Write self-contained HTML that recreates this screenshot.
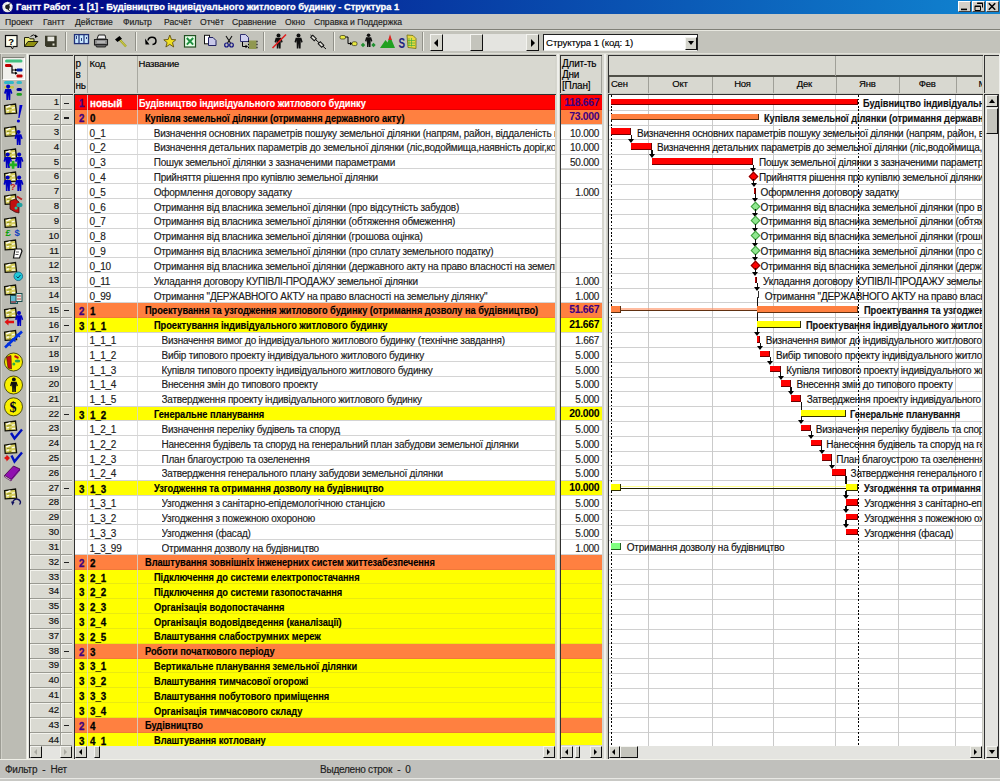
<!DOCTYPE html>
<html><head><meta charset="utf-8"><style>
*{margin:0;padding:0;box-sizing:border-box}
html,body{width:1000px;height:781px;overflow:hidden;background:#c8c8c0;font-family:"Liberation Sans",sans-serif;color:#000}
.a{position:absolute}
.t{position:absolute;white-space:nowrap;font-size:10px;line-height:12px;letter-spacing:-0.23px;-webkit-text-stroke:0.15px currentColor}
.b{font-weight:bold;font-size:10.3px;letter-spacing:-0.05px;-webkit-text-stroke:0.15px currentColor;transform:scaleX(0.9);transform-origin:0 0}
.bn{font-weight:bold;font-size:10.4px;letter-spacing:-0.3px;margin-top:-1.3px;-webkit-text-stroke:0.05px currentColor}
.bl{font-weight:bold;-webkit-text-stroke:0.3px currentColor}
</style></head><body>

<div class="a" style="left:0;top:0;width:1000px;height:14px;background:linear-gradient(90deg,#000080 0%,#1084d0 100%)"></div>
<div class="t bl" style="left:16px;top:1px;color:#fff;font-size:9.3px;letter-spacing:0">Гантт Работ - 1 [1] - Будівництво індивідуального житлового будинку - Структура 1</div>
<div class="a" style="left:958px;top:1px;width:13px;height:11px;background:#d4d0c8;border:1px solid;border-color:#fff #404040 #404040 #fff"></div>
<div class="a" style="left:972px;top:1px;width:13px;height:11px;background:#d4d0c8;border:1px solid;border-color:#fff #404040 #404040 #fff"></div>
<div class="a" style="left:986px;top:1px;width:13px;height:11px;background:#d4d0c8;border:1px solid;border-color:#fff #404040 #404040 #fff"></div>
<svg class="a" style="left:950px;top:0" width="50" height="14" viewBox="950 0 50 14"><rect x="961" y="8.6" width="6" height="1.6" fill="#000"/><path d="M977.5,3.5 h5 v4 M975,6.5 h5.5 v4 h-5.5 Z" fill="#d4d0c8" stroke="#000" stroke-width="1"/><path d="M977.2,3.3 h5.6 M974.7,6.2 h6" stroke="#000" stroke-width="1.6"/><path d="M988.8,3.3 L995.2,9.7 M995.2,3.3 L988.8,9.7" stroke="#000" stroke-width="1.5"/></svg>
<div class="a" style="left:0;top:14px;width:1000px;height:15px;background:#c9c9c4"></div>
<div class="t" style="left:5px;top:16px;font-size:8.6px;letter-spacing:0;color:#202020">Проект</div>
<div class="t" style="left:43px;top:16px;font-size:8.6px;letter-spacing:0;color:#202020">Гантт</div>
<div class="t" style="left:75px;top:16px;font-size:8.6px;letter-spacing:0;color:#202020">Действие</div>
<div class="t" style="left:123px;top:16px;font-size:8.6px;letter-spacing:0;color:#202020">Фильтр</div>
<div class="t" style="left:164px;top:16px;font-size:8.6px;letter-spacing:0;color:#202020">Расчёт</div>
<div class="t" style="left:200px;top:16px;font-size:8.6px;letter-spacing:0;color:#202020">Отчёт</div>
<div class="t" style="left:232px;top:16px;font-size:8.6px;letter-spacing:0;color:#202020">Сравнение</div>
<div class="t" style="left:285px;top:16px;font-size:8.6px;letter-spacing:0;color:#202020">Окно</div>
<div class="t" style="left:314px;top:16px;font-size:8.6px;letter-spacing:0;color:#202020">Справка и Поддержка</div>
<div class="a" style="left:0;top:29px;width:1000px;height:1px;background:#808078"></div>
<div class="a" style="left:0;top:30px;width:1000px;height:1px;background:#e8e8e0"></div>
<div class="a" style="left:0;top:31px;width:1000px;height:22px;background:#c3c3bb"></div>
<div class="a" style="left:65px;top:32px;width:1px;height:19px;background:#909088"></div><div class="a" style="left:66px;top:32px;width:1px;height:19px;background:#f0f0e8"></div>
<div class="a" style="left:135px;top:32px;width:1px;height:19px;background:#909088"></div><div class="a" style="left:136px;top:32px;width:1px;height:19px;background:#f0f0e8"></div>
<div class="a" style="left:263px;top:32px;width:1px;height:19px;background:#909088"></div><div class="a" style="left:264px;top:32px;width:1px;height:19px;background:#f0f0e8"></div>
<div class="a" style="left:332.5px;top:32px;width:1px;height:19px;background:#909088"></div><div class="a" style="left:333.5px;top:32px;width:1px;height:19px;background:#f0f0e8"></div>
<div class="a" style="left:422px;top:32px;width:1px;height:19px;background:#909088"></div><div class="a" style="left:423px;top:32px;width:1px;height:19px;background:#f0f0e8"></div>
<div class="a" style="left:430px;top:34px;width:109px;height:17px;background:#e4e4e0"></div>
<div class="a" style="left:430px;top:34px;width:13px;height:17px;background:#d4d4cc;border-top:1px solid #f4f4f0;border-left:1px solid #f4f4f0;border-right:1.6px solid #101010;border-bottom:1.6px solid #101010"></div>
<div class="a" style="left:526px;top:34px;width:13px;height:17px;background:#d4d4cc;border-top:1px solid #f4f4f0;border-left:1px solid #f4f4f0;border-right:1.6px solid #101010;border-bottom:1.6px solid #101010"></div>
<div class="a" style="left:470px;top:34px;width:13px;height:17px;background:#c4c4bc;border-top:1px solid #f4f4f0;border-left:1px solid #f4f4f0;border-right:1.6px solid #101010;border-bottom:1.6px solid #101010"></div>
<div class="a" style="left:434px;top:39px;width:0;height:0;border-top:4px solid transparent;border-bottom:4px solid transparent;border-right:4px solid #000"></div>
<div class="a" style="left:531px;top:39px;width:0;height:0;border-top:4px solid transparent;border-bottom:4px solid transparent;border-left:4px solid #000"></div>
<div class="a" style="left:543px;top:34px;width:155px;height:17px;background:#fff;border-top:1.3px solid #202020;border-left:1.3px solid #202020;border-right:1.3px solid #202020;border-bottom:1px solid #f0f0ec"></div>
<div class="a" style="left:685px;top:36.6px;width:12px;height:13px;background:#d4d4cc;border-top:1px solid #f4f4f0;border-left:1px solid #f4f4f0;border-right:1.6px solid #101010;border-bottom:1.6px solid #101010"></div>
<div class="a" style="left:688px;top:41px;width:0;height:0;border-left:3.5px solid transparent;border-right:3.5px solid transparent;border-top:4px solid #000"></div>
<div class="t" style="left:546px;top:37px;font-size:9.7px;letter-spacing:-0.1px">Структура 1 (код: 1)</div>
<div class="a" style="left:0;top:53px;width:1000px;height:1px;background:#e0e0d8"></div>
<div class="a" style="left:0;top:54px;width:27px;height:705px;background:#bcbcb4"></div>
<div class="a" style="left:0;top:54px;width:1px;height:705px;background:#9c9c94"></div>
<div class="a" style="left:1px;top:54px;width:1px;height:705px;background:#d0d0c8"></div>
<div class="a" style="left:25.5px;top:54px;width:3px;height:705px;background:#e4e4dc"></div>
<div class="a" style="left:26.5px;top:54px;width:1px;height:705px;background:#f8f8f4"></div>
<div class="a" style="left:2px;top:57px;width:23px;height:23px;background:#f0f0ec;border:1px solid;border-color:#808078 #fff #fff #808078"></div>
<div class="a" style="left:28.5px;top:54.5px;width:46px;height:704px;background:#d8d8d0"></div>
<div class="a" style="left:29px;top:55px;width:1.2px;height:703px;background:#303030"></div>
<div class="a" style="left:29px;top:55px;width:44px;height:1.2px;background:#303030"></div>
<div class="a" style="left:30px;top:56px;width:42.5px;height:37px;background:#d8d8d0"></div>
<div class="a" style="left:29px;top:94px;width:44px;height:1.2px;background:#303030"></div>
<div class="a" style="left:30.2px;top:95.40px;width:30.5px;height:14.82px;background:#dadad2;border-bottom:1px solid #9a9a92;border-right:1px solid #9a9a92;box-shadow:inset 1px 1px 0 #f4f4ee"></div>
<div class="a" style="left:61.2px;top:95.40px;width:11.3px;height:14.82px;background:#dadad2;border-bottom:1px solid #9a9a92;box-shadow:inset 1px 1px 0 #f4f4ee"></div>
<div class="t" style="left:30px;width:29px;text-align:right;top:96.30px;color:#101010;font-size:9.7px;letter-spacing:-0.1px">1</div>
<div class="a" style="left:63.5px;top:102.60px;width:5.5px;height:1.1px;background:#202020"></div>
<div class="a" style="left:30.2px;top:110.22px;width:30.5px;height:14.82px;background:#dadad2;border-bottom:1px solid #9a9a92;border-right:1px solid #9a9a92;box-shadow:inset 1px 1px 0 #f4f4ee"></div>
<div class="a" style="left:61.2px;top:110.22px;width:11.3px;height:14.82px;background:#dadad2;border-bottom:1px solid #9a9a92;box-shadow:inset 1px 1px 0 #f4f4ee"></div>
<div class="t" style="left:30px;width:29px;text-align:right;top:111.12px;color:#101010;font-size:9.7px;letter-spacing:-0.1px">2</div>
<div class="a" style="left:63.5px;top:117.42px;width:5.5px;height:1.1px;background:#202020"></div>
<div class="a" style="left:30.2px;top:125.04px;width:30.5px;height:14.82px;background:#dadad2;border-bottom:1px solid #9a9a92;border-right:1px solid #9a9a92;box-shadow:inset 1px 1px 0 #f4f4ee"></div>
<div class="a" style="left:61.2px;top:125.04px;width:11.3px;height:14.82px;background:#dadad2;border-bottom:1px solid #9a9a92;box-shadow:inset 1px 1px 0 #f4f4ee"></div>
<div class="t" style="left:30px;width:29px;text-align:right;top:125.94px;color:#101010;font-size:9.7px;letter-spacing:-0.1px">3</div>
<div class="a" style="left:30.2px;top:139.86px;width:30.5px;height:14.82px;background:#dadad2;border-bottom:1px solid #9a9a92;border-right:1px solid #9a9a92;box-shadow:inset 1px 1px 0 #f4f4ee"></div>
<div class="a" style="left:61.2px;top:139.86px;width:11.3px;height:14.82px;background:#dadad2;border-bottom:1px solid #9a9a92;box-shadow:inset 1px 1px 0 #f4f4ee"></div>
<div class="t" style="left:30px;width:29px;text-align:right;top:140.76px;color:#101010;font-size:9.7px;letter-spacing:-0.1px">4</div>
<div class="a" style="left:30.2px;top:154.68px;width:30.5px;height:14.82px;background:#dadad2;border-bottom:1px solid #9a9a92;border-right:1px solid #9a9a92;box-shadow:inset 1px 1px 0 #f4f4ee"></div>
<div class="a" style="left:61.2px;top:154.68px;width:11.3px;height:14.82px;background:#dadad2;border-bottom:1px solid #9a9a92;box-shadow:inset 1px 1px 0 #f4f4ee"></div>
<div class="t" style="left:30px;width:29px;text-align:right;top:155.58px;color:#101010;font-size:9.7px;letter-spacing:-0.1px">5</div>
<div class="a" style="left:30.2px;top:169.50px;width:30.5px;height:14.82px;background:#dadad2;border-bottom:1px solid #9a9a92;border-right:1px solid #9a9a92;box-shadow:inset 1px 1px 0 #f4f4ee"></div>
<div class="a" style="left:61.2px;top:169.50px;width:11.3px;height:14.82px;background:#dadad2;border-bottom:1px solid #9a9a92;box-shadow:inset 1px 1px 0 #f4f4ee"></div>
<div class="t" style="left:30px;width:29px;text-align:right;top:170.40px;color:#101010;font-size:9.7px;letter-spacing:-0.1px">6</div>
<div class="a" style="left:30.2px;top:184.32px;width:30.5px;height:14.82px;background:#dadad2;border-bottom:1px solid #9a9a92;border-right:1px solid #9a9a92;box-shadow:inset 1px 1px 0 #f4f4ee"></div>
<div class="a" style="left:61.2px;top:184.32px;width:11.3px;height:14.82px;background:#dadad2;border-bottom:1px solid #9a9a92;box-shadow:inset 1px 1px 0 #f4f4ee"></div>
<div class="t" style="left:30px;width:29px;text-align:right;top:185.22px;color:#101010;font-size:9.7px;letter-spacing:-0.1px">7</div>
<div class="a" style="left:30.2px;top:199.14px;width:30.5px;height:14.82px;background:#dadad2;border-bottom:1px solid #9a9a92;border-right:1px solid #9a9a92;box-shadow:inset 1px 1px 0 #f4f4ee"></div>
<div class="a" style="left:61.2px;top:199.14px;width:11.3px;height:14.82px;background:#dadad2;border-bottom:1px solid #9a9a92;box-shadow:inset 1px 1px 0 #f4f4ee"></div>
<div class="t" style="left:30px;width:29px;text-align:right;top:200.04px;color:#101010;font-size:9.7px;letter-spacing:-0.1px">8</div>
<div class="a" style="left:30.2px;top:213.96px;width:30.5px;height:14.82px;background:#dadad2;border-bottom:1px solid #9a9a92;border-right:1px solid #9a9a92;box-shadow:inset 1px 1px 0 #f4f4ee"></div>
<div class="a" style="left:61.2px;top:213.96px;width:11.3px;height:14.82px;background:#dadad2;border-bottom:1px solid #9a9a92;box-shadow:inset 1px 1px 0 #f4f4ee"></div>
<div class="t" style="left:30px;width:29px;text-align:right;top:214.86px;color:#101010;font-size:9.7px;letter-spacing:-0.1px">9</div>
<div class="a" style="left:30.2px;top:228.78px;width:30.5px;height:14.82px;background:#dadad2;border-bottom:1px solid #9a9a92;border-right:1px solid #9a9a92;box-shadow:inset 1px 1px 0 #f4f4ee"></div>
<div class="a" style="left:61.2px;top:228.78px;width:11.3px;height:14.82px;background:#dadad2;border-bottom:1px solid #9a9a92;box-shadow:inset 1px 1px 0 #f4f4ee"></div>
<div class="t" style="left:30px;width:29px;text-align:right;top:229.68px;color:#101010;font-size:9.7px;letter-spacing:-0.1px">10</div>
<div class="a" style="left:30.2px;top:243.60px;width:30.5px;height:14.82px;background:#dadad2;border-bottom:1px solid #9a9a92;border-right:1px solid #9a9a92;box-shadow:inset 1px 1px 0 #f4f4ee"></div>
<div class="a" style="left:61.2px;top:243.60px;width:11.3px;height:14.82px;background:#dadad2;border-bottom:1px solid #9a9a92;box-shadow:inset 1px 1px 0 #f4f4ee"></div>
<div class="t" style="left:30px;width:29px;text-align:right;top:244.50px;color:#101010;font-size:9.7px;letter-spacing:-0.1px">11</div>
<div class="a" style="left:30.2px;top:258.42px;width:30.5px;height:14.82px;background:#dadad2;border-bottom:1px solid #9a9a92;border-right:1px solid #9a9a92;box-shadow:inset 1px 1px 0 #f4f4ee"></div>
<div class="a" style="left:61.2px;top:258.42px;width:11.3px;height:14.82px;background:#dadad2;border-bottom:1px solid #9a9a92;box-shadow:inset 1px 1px 0 #f4f4ee"></div>
<div class="t" style="left:30px;width:29px;text-align:right;top:259.32px;color:#101010;font-size:9.7px;letter-spacing:-0.1px">12</div>
<div class="a" style="left:30.2px;top:273.24px;width:30.5px;height:14.82px;background:#dadad2;border-bottom:1px solid #9a9a92;border-right:1px solid #9a9a92;box-shadow:inset 1px 1px 0 #f4f4ee"></div>
<div class="a" style="left:61.2px;top:273.24px;width:11.3px;height:14.82px;background:#dadad2;border-bottom:1px solid #9a9a92;box-shadow:inset 1px 1px 0 #f4f4ee"></div>
<div class="t" style="left:30px;width:29px;text-align:right;top:274.14px;color:#101010;font-size:9.7px;letter-spacing:-0.1px">13</div>
<div class="a" style="left:30.2px;top:288.06px;width:30.5px;height:14.82px;background:#dadad2;border-bottom:1px solid #9a9a92;border-right:1px solid #9a9a92;box-shadow:inset 1px 1px 0 #f4f4ee"></div>
<div class="a" style="left:61.2px;top:288.06px;width:11.3px;height:14.82px;background:#dadad2;border-bottom:1px solid #9a9a92;box-shadow:inset 1px 1px 0 #f4f4ee"></div>
<div class="t" style="left:30px;width:29px;text-align:right;top:288.96px;color:#101010;font-size:9.7px;letter-spacing:-0.1px">14</div>
<div class="a" style="left:30.2px;top:302.88px;width:30.5px;height:14.82px;background:#dadad2;border-bottom:1px solid #9a9a92;border-right:1px solid #9a9a92;box-shadow:inset 1px 1px 0 #f4f4ee"></div>
<div class="a" style="left:61.2px;top:302.88px;width:11.3px;height:14.82px;background:#dadad2;border-bottom:1px solid #9a9a92;box-shadow:inset 1px 1px 0 #f4f4ee"></div>
<div class="t" style="left:30px;width:29px;text-align:right;top:303.78px;color:#101010;font-size:9.7px;letter-spacing:-0.1px">15</div>
<div class="a" style="left:63.5px;top:310.08px;width:5.5px;height:1.1px;background:#202020"></div>
<div class="a" style="left:30.2px;top:317.70px;width:30.5px;height:14.82px;background:#dadad2;border-bottom:1px solid #9a9a92;border-right:1px solid #9a9a92;box-shadow:inset 1px 1px 0 #f4f4ee"></div>
<div class="a" style="left:61.2px;top:317.70px;width:11.3px;height:14.82px;background:#dadad2;border-bottom:1px solid #9a9a92;box-shadow:inset 1px 1px 0 #f4f4ee"></div>
<div class="t" style="left:30px;width:29px;text-align:right;top:318.60px;color:#101010;font-size:9.7px;letter-spacing:-0.1px">16</div>
<div class="a" style="left:63.5px;top:324.90px;width:5.5px;height:1.1px;background:#202020"></div>
<div class="a" style="left:30.2px;top:332.52px;width:30.5px;height:14.82px;background:#dadad2;border-bottom:1px solid #9a9a92;border-right:1px solid #9a9a92;box-shadow:inset 1px 1px 0 #f4f4ee"></div>
<div class="a" style="left:61.2px;top:332.52px;width:11.3px;height:14.82px;background:#dadad2;border-bottom:1px solid #9a9a92;box-shadow:inset 1px 1px 0 #f4f4ee"></div>
<div class="t" style="left:30px;width:29px;text-align:right;top:333.42px;color:#101010;font-size:9.7px;letter-spacing:-0.1px">17</div>
<div class="a" style="left:30.2px;top:347.34px;width:30.5px;height:14.82px;background:#dadad2;border-bottom:1px solid #9a9a92;border-right:1px solid #9a9a92;box-shadow:inset 1px 1px 0 #f4f4ee"></div>
<div class="a" style="left:61.2px;top:347.34px;width:11.3px;height:14.82px;background:#dadad2;border-bottom:1px solid #9a9a92;box-shadow:inset 1px 1px 0 #f4f4ee"></div>
<div class="t" style="left:30px;width:29px;text-align:right;top:348.24px;color:#101010;font-size:9.7px;letter-spacing:-0.1px">18</div>
<div class="a" style="left:30.2px;top:362.16px;width:30.5px;height:14.82px;background:#dadad2;border-bottom:1px solid #9a9a92;border-right:1px solid #9a9a92;box-shadow:inset 1px 1px 0 #f4f4ee"></div>
<div class="a" style="left:61.2px;top:362.16px;width:11.3px;height:14.82px;background:#dadad2;border-bottom:1px solid #9a9a92;box-shadow:inset 1px 1px 0 #f4f4ee"></div>
<div class="t" style="left:30px;width:29px;text-align:right;top:363.06px;color:#101010;font-size:9.7px;letter-spacing:-0.1px">19</div>
<div class="a" style="left:30.2px;top:376.98px;width:30.5px;height:14.82px;background:#dadad2;border-bottom:1px solid #9a9a92;border-right:1px solid #9a9a92;box-shadow:inset 1px 1px 0 #f4f4ee"></div>
<div class="a" style="left:61.2px;top:376.98px;width:11.3px;height:14.82px;background:#dadad2;border-bottom:1px solid #9a9a92;box-shadow:inset 1px 1px 0 #f4f4ee"></div>
<div class="t" style="left:30px;width:29px;text-align:right;top:377.88px;color:#101010;font-size:9.7px;letter-spacing:-0.1px">20</div>
<div class="a" style="left:30.2px;top:391.80px;width:30.5px;height:14.82px;background:#dadad2;border-bottom:1px solid #9a9a92;border-right:1px solid #9a9a92;box-shadow:inset 1px 1px 0 #f4f4ee"></div>
<div class="a" style="left:61.2px;top:391.80px;width:11.3px;height:14.82px;background:#dadad2;border-bottom:1px solid #9a9a92;box-shadow:inset 1px 1px 0 #f4f4ee"></div>
<div class="t" style="left:30px;width:29px;text-align:right;top:392.70px;color:#101010;font-size:9.7px;letter-spacing:-0.1px">21</div>
<div class="a" style="left:30.2px;top:406.62px;width:30.5px;height:14.82px;background:#dadad2;border-bottom:1px solid #9a9a92;border-right:1px solid #9a9a92;box-shadow:inset 1px 1px 0 #f4f4ee"></div>
<div class="a" style="left:61.2px;top:406.62px;width:11.3px;height:14.82px;background:#dadad2;border-bottom:1px solid #9a9a92;box-shadow:inset 1px 1px 0 #f4f4ee"></div>
<div class="t" style="left:30px;width:29px;text-align:right;top:407.52px;color:#101010;font-size:9.7px;letter-spacing:-0.1px">22</div>
<div class="a" style="left:63.5px;top:413.82px;width:5.5px;height:1.1px;background:#202020"></div>
<div class="a" style="left:30.2px;top:421.44px;width:30.5px;height:14.82px;background:#dadad2;border-bottom:1px solid #9a9a92;border-right:1px solid #9a9a92;box-shadow:inset 1px 1px 0 #f4f4ee"></div>
<div class="a" style="left:61.2px;top:421.44px;width:11.3px;height:14.82px;background:#dadad2;border-bottom:1px solid #9a9a92;box-shadow:inset 1px 1px 0 #f4f4ee"></div>
<div class="t" style="left:30px;width:29px;text-align:right;top:422.34px;color:#101010;font-size:9.7px;letter-spacing:-0.1px">23</div>
<div class="a" style="left:30.2px;top:436.26px;width:30.5px;height:14.82px;background:#dadad2;border-bottom:1px solid #9a9a92;border-right:1px solid #9a9a92;box-shadow:inset 1px 1px 0 #f4f4ee"></div>
<div class="a" style="left:61.2px;top:436.26px;width:11.3px;height:14.82px;background:#dadad2;border-bottom:1px solid #9a9a92;box-shadow:inset 1px 1px 0 #f4f4ee"></div>
<div class="t" style="left:30px;width:29px;text-align:right;top:437.16px;color:#101010;font-size:9.7px;letter-spacing:-0.1px">24</div>
<div class="a" style="left:30.2px;top:451.08px;width:30.5px;height:14.82px;background:#dadad2;border-bottom:1px solid #9a9a92;border-right:1px solid #9a9a92;box-shadow:inset 1px 1px 0 #f4f4ee"></div>
<div class="a" style="left:61.2px;top:451.08px;width:11.3px;height:14.82px;background:#dadad2;border-bottom:1px solid #9a9a92;box-shadow:inset 1px 1px 0 #f4f4ee"></div>
<div class="t" style="left:30px;width:29px;text-align:right;top:451.98px;color:#101010;font-size:9.7px;letter-spacing:-0.1px">25</div>
<div class="a" style="left:30.2px;top:465.90px;width:30.5px;height:14.82px;background:#dadad2;border-bottom:1px solid #9a9a92;border-right:1px solid #9a9a92;box-shadow:inset 1px 1px 0 #f4f4ee"></div>
<div class="a" style="left:61.2px;top:465.90px;width:11.3px;height:14.82px;background:#dadad2;border-bottom:1px solid #9a9a92;box-shadow:inset 1px 1px 0 #f4f4ee"></div>
<div class="t" style="left:30px;width:29px;text-align:right;top:466.80px;color:#101010;font-size:9.7px;letter-spacing:-0.1px">26</div>
<div class="a" style="left:30.2px;top:480.72px;width:30.5px;height:14.82px;background:#dadad2;border-bottom:1px solid #9a9a92;border-right:1px solid #9a9a92;box-shadow:inset 1px 1px 0 #f4f4ee"></div>
<div class="a" style="left:61.2px;top:480.72px;width:11.3px;height:14.82px;background:#dadad2;border-bottom:1px solid #9a9a92;box-shadow:inset 1px 1px 0 #f4f4ee"></div>
<div class="t" style="left:30px;width:29px;text-align:right;top:481.62px;color:#101010;font-size:9.7px;letter-spacing:-0.1px">27</div>
<div class="a" style="left:63.5px;top:487.92px;width:5.5px;height:1.1px;background:#202020"></div>
<div class="a" style="left:30.2px;top:495.54px;width:30.5px;height:14.82px;background:#dadad2;border-bottom:1px solid #9a9a92;border-right:1px solid #9a9a92;box-shadow:inset 1px 1px 0 #f4f4ee"></div>
<div class="a" style="left:61.2px;top:495.54px;width:11.3px;height:14.82px;background:#dadad2;border-bottom:1px solid #9a9a92;box-shadow:inset 1px 1px 0 #f4f4ee"></div>
<div class="t" style="left:30px;width:29px;text-align:right;top:496.44px;color:#101010;font-size:9.7px;letter-spacing:-0.1px">28</div>
<div class="a" style="left:30.2px;top:510.36px;width:30.5px;height:14.82px;background:#dadad2;border-bottom:1px solid #9a9a92;border-right:1px solid #9a9a92;box-shadow:inset 1px 1px 0 #f4f4ee"></div>
<div class="a" style="left:61.2px;top:510.36px;width:11.3px;height:14.82px;background:#dadad2;border-bottom:1px solid #9a9a92;box-shadow:inset 1px 1px 0 #f4f4ee"></div>
<div class="t" style="left:30px;width:29px;text-align:right;top:511.26px;color:#101010;font-size:9.7px;letter-spacing:-0.1px">29</div>
<div class="a" style="left:30.2px;top:525.18px;width:30.5px;height:14.82px;background:#dadad2;border-bottom:1px solid #9a9a92;border-right:1px solid #9a9a92;box-shadow:inset 1px 1px 0 #f4f4ee"></div>
<div class="a" style="left:61.2px;top:525.18px;width:11.3px;height:14.82px;background:#dadad2;border-bottom:1px solid #9a9a92;box-shadow:inset 1px 1px 0 #f4f4ee"></div>
<div class="t" style="left:30px;width:29px;text-align:right;top:526.08px;color:#101010;font-size:9.7px;letter-spacing:-0.1px">30</div>
<div class="a" style="left:30.2px;top:540.00px;width:30.5px;height:14.82px;background:#dadad2;border-bottom:1px solid #9a9a92;border-right:1px solid #9a9a92;box-shadow:inset 1px 1px 0 #f4f4ee"></div>
<div class="a" style="left:61.2px;top:540.00px;width:11.3px;height:14.82px;background:#dadad2;border-bottom:1px solid #9a9a92;box-shadow:inset 1px 1px 0 #f4f4ee"></div>
<div class="t" style="left:30px;width:29px;text-align:right;top:540.90px;color:#101010;font-size:9.7px;letter-spacing:-0.1px">31</div>
<div class="a" style="left:30.2px;top:554.82px;width:30.5px;height:14.82px;background:#dadad2;border-bottom:1px solid #9a9a92;border-right:1px solid #9a9a92;box-shadow:inset 1px 1px 0 #f4f4ee"></div>
<div class="a" style="left:61.2px;top:554.82px;width:11.3px;height:14.82px;background:#dadad2;border-bottom:1px solid #9a9a92;box-shadow:inset 1px 1px 0 #f4f4ee"></div>
<div class="t" style="left:30px;width:29px;text-align:right;top:555.72px;color:#101010;font-size:9.7px;letter-spacing:-0.1px">32</div>
<div class="a" style="left:63.5px;top:562.02px;width:5.5px;height:1.1px;background:#202020"></div>
<div class="a" style="left:30.2px;top:569.64px;width:30.5px;height:14.82px;background:#dadad2;border-bottom:1px solid #9a9a92;border-right:1px solid #9a9a92;box-shadow:inset 1px 1px 0 #f4f4ee"></div>
<div class="a" style="left:61.2px;top:569.64px;width:11.3px;height:14.82px;background:#dadad2;border-bottom:1px solid #9a9a92;box-shadow:inset 1px 1px 0 #f4f4ee"></div>
<div class="t" style="left:30px;width:29px;text-align:right;top:570.54px;color:#101010;font-size:9.7px;letter-spacing:-0.1px">33</div>
<div class="a" style="left:30.2px;top:584.46px;width:30.5px;height:14.82px;background:#dadad2;border-bottom:1px solid #9a9a92;border-right:1px solid #9a9a92;box-shadow:inset 1px 1px 0 #f4f4ee"></div>
<div class="a" style="left:61.2px;top:584.46px;width:11.3px;height:14.82px;background:#dadad2;border-bottom:1px solid #9a9a92;box-shadow:inset 1px 1px 0 #f4f4ee"></div>
<div class="t" style="left:30px;width:29px;text-align:right;top:585.36px;color:#101010;font-size:9.7px;letter-spacing:-0.1px">34</div>
<div class="a" style="left:30.2px;top:599.28px;width:30.5px;height:14.82px;background:#dadad2;border-bottom:1px solid #9a9a92;border-right:1px solid #9a9a92;box-shadow:inset 1px 1px 0 #f4f4ee"></div>
<div class="a" style="left:61.2px;top:599.28px;width:11.3px;height:14.82px;background:#dadad2;border-bottom:1px solid #9a9a92;box-shadow:inset 1px 1px 0 #f4f4ee"></div>
<div class="t" style="left:30px;width:29px;text-align:right;top:600.18px;color:#101010;font-size:9.7px;letter-spacing:-0.1px">35</div>
<div class="a" style="left:30.2px;top:614.10px;width:30.5px;height:14.82px;background:#dadad2;border-bottom:1px solid #9a9a92;border-right:1px solid #9a9a92;box-shadow:inset 1px 1px 0 #f4f4ee"></div>
<div class="a" style="left:61.2px;top:614.10px;width:11.3px;height:14.82px;background:#dadad2;border-bottom:1px solid #9a9a92;box-shadow:inset 1px 1px 0 #f4f4ee"></div>
<div class="t" style="left:30px;width:29px;text-align:right;top:615.00px;color:#101010;font-size:9.7px;letter-spacing:-0.1px">36</div>
<div class="a" style="left:30.2px;top:628.92px;width:30.5px;height:14.82px;background:#dadad2;border-bottom:1px solid #9a9a92;border-right:1px solid #9a9a92;box-shadow:inset 1px 1px 0 #f4f4ee"></div>
<div class="a" style="left:61.2px;top:628.92px;width:11.3px;height:14.82px;background:#dadad2;border-bottom:1px solid #9a9a92;box-shadow:inset 1px 1px 0 #f4f4ee"></div>
<div class="t" style="left:30px;width:29px;text-align:right;top:629.82px;color:#101010;font-size:9.7px;letter-spacing:-0.1px">37</div>
<div class="a" style="left:30.2px;top:643.74px;width:30.5px;height:14.82px;background:#dadad2;border-bottom:1px solid #9a9a92;border-right:1px solid #9a9a92;box-shadow:inset 1px 1px 0 #f4f4ee"></div>
<div class="a" style="left:61.2px;top:643.74px;width:11.3px;height:14.82px;background:#dadad2;border-bottom:1px solid #9a9a92;box-shadow:inset 1px 1px 0 #f4f4ee"></div>
<div class="t" style="left:30px;width:29px;text-align:right;top:644.64px;color:#101010;font-size:9.7px;letter-spacing:-0.1px">38</div>
<div class="a" style="left:63.5px;top:650.94px;width:5.5px;height:1.1px;background:#202020"></div>
<div class="a" style="left:30.2px;top:658.56px;width:30.5px;height:14.82px;background:#dadad2;border-bottom:1px solid #9a9a92;border-right:1px solid #9a9a92;box-shadow:inset 1px 1px 0 #f4f4ee"></div>
<div class="a" style="left:61.2px;top:658.56px;width:11.3px;height:14.82px;background:#dadad2;border-bottom:1px solid #9a9a92;box-shadow:inset 1px 1px 0 #f4f4ee"></div>
<div class="t" style="left:30px;width:29px;text-align:right;top:659.46px;color:#101010;font-size:9.7px;letter-spacing:-0.1px">39</div>
<div class="a" style="left:30.2px;top:673.38px;width:30.5px;height:14.82px;background:#dadad2;border-bottom:1px solid #9a9a92;border-right:1px solid #9a9a92;box-shadow:inset 1px 1px 0 #f4f4ee"></div>
<div class="a" style="left:61.2px;top:673.38px;width:11.3px;height:14.82px;background:#dadad2;border-bottom:1px solid #9a9a92;box-shadow:inset 1px 1px 0 #f4f4ee"></div>
<div class="t" style="left:30px;width:29px;text-align:right;top:674.28px;color:#101010;font-size:9.7px;letter-spacing:-0.1px">40</div>
<div class="a" style="left:30.2px;top:688.20px;width:30.5px;height:14.82px;background:#dadad2;border-bottom:1px solid #9a9a92;border-right:1px solid #9a9a92;box-shadow:inset 1px 1px 0 #f4f4ee"></div>
<div class="a" style="left:61.2px;top:688.20px;width:11.3px;height:14.82px;background:#dadad2;border-bottom:1px solid #9a9a92;box-shadow:inset 1px 1px 0 #f4f4ee"></div>
<div class="t" style="left:30px;width:29px;text-align:right;top:689.10px;color:#101010;font-size:9.7px;letter-spacing:-0.1px">41</div>
<div class="a" style="left:30.2px;top:703.02px;width:30.5px;height:14.82px;background:#dadad2;border-bottom:1px solid #9a9a92;border-right:1px solid #9a9a92;box-shadow:inset 1px 1px 0 #f4f4ee"></div>
<div class="a" style="left:61.2px;top:703.02px;width:11.3px;height:14.82px;background:#dadad2;border-bottom:1px solid #9a9a92;box-shadow:inset 1px 1px 0 #f4f4ee"></div>
<div class="t" style="left:30px;width:29px;text-align:right;top:703.92px;color:#101010;font-size:9.7px;letter-spacing:-0.1px">42</div>
<div class="a" style="left:30.2px;top:717.84px;width:30.5px;height:14.82px;background:#dadad2;border-bottom:1px solid #9a9a92;border-right:1px solid #9a9a92;box-shadow:inset 1px 1px 0 #f4f4ee"></div>
<div class="a" style="left:61.2px;top:717.84px;width:11.3px;height:14.82px;background:#dadad2;border-bottom:1px solid #9a9a92;box-shadow:inset 1px 1px 0 #f4f4ee"></div>
<div class="t" style="left:30px;width:29px;text-align:right;top:718.74px;color:#101010;font-size:9.7px;letter-spacing:-0.1px">43</div>
<div class="a" style="left:63.5px;top:725.04px;width:5.5px;height:1.1px;background:#202020"></div>
<div class="a" style="left:30.2px;top:732.66px;width:30.5px;height:13.34px;background:#dadad2;border-bottom:1px solid #9a9a92;border-right:1px solid #9a9a92;box-shadow:inset 1px 1px 0 #f4f4ee"></div>
<div class="a" style="left:61.2px;top:732.66px;width:11.3px;height:13.34px;background:#dadad2;border-bottom:1px solid #9a9a92;box-shadow:inset 1px 1px 0 #f4f4ee"></div>
<div class="t" style="left:30px;width:29px;text-align:right;top:733.56px;color:#101010;font-size:9.7px;letter-spacing:-0.1px">44</div>
<div class="a" style="left:74.0px;top:54.5px;width:486.5px;height:704px;background:#d4d4cc"></div>
<div class="a" style="left:74.0px;top:54.6px;width:481.5px;height:1.4px;background:#303030"></div>
<div class="a" style="left:74.0px;top:54.6px;width:1.2px;height:38px;background:#303030"></div>
<div class="a" style="left:75.1px;top:56px;width:480.4px;height:36.5px;background:#d8d8d0"></div>
<div class="a" style="left:86.8px;top:56px;width:1.2px;height:36.5px;background:#a8a8a0"></div>
<div class="a" style="left:136.5px;top:56px;width:1.2px;height:36.5px;background:#a8a8a0"></div>
<div class="t" style="left:75.5px;top:58px;line-height:11.2px">р<br>в<br>нь</div>
<div class="t" style="left:89.5px;top:58px;font-size:9.5px">Код</div>
<div class="t" style="left:138.5px;top:58px;font-size:9.5px">Название</div>
<div class="a" style="left:74.0px;top:93.8px;width:481.5px;height:1.4px;background:#303030"></div>
<div class="a" style="left:74.0px;top:93.8px;width:1.2px;height:665px;background:#303030"></div>
<div class="a" style="left:75.1px;top:95.2px;width:480.4px;height:651px;background:#fff;overflow:hidden">
<div class="a" style="left:0;top:0.20px;width:480.4px;height:14.82px;background:#ff0000;border-bottom:1px solid #e00000"></div>
<div class="a" style="left:0;top:15.02px;width:480.4px;height:14.82px;background:#ff8040;border-bottom:1px solid #d4d4d4"></div>
<div class="a" style="left:0;top:29.84px;width:480.4px;height:14.82px;background:#ffffff;border-bottom:1px solid #d4d4d4"></div>
<div class="a" style="left:0;top:44.66px;width:480.4px;height:14.82px;background:#ffffff;border-bottom:1px solid #d4d4d4"></div>
<div class="a" style="left:0;top:59.48px;width:480.4px;height:14.82px;background:#ffffff;border-bottom:1px solid #d4d4d4"></div>
<div class="a" style="left:0;top:74.30px;width:480.4px;height:14.82px;background:#ffffff;border-bottom:1px solid #d4d4d4"></div>
<div class="a" style="left:0;top:89.12px;width:480.4px;height:14.82px;background:#ffffff;border-bottom:1px solid #d4d4d4"></div>
<div class="a" style="left:0;top:103.94px;width:480.4px;height:14.82px;background:#ffffff;border-bottom:1px solid #d4d4d4"></div>
<div class="a" style="left:0;top:118.76px;width:480.4px;height:14.82px;background:#ffffff;border-bottom:1px solid #d4d4d4"></div>
<div class="a" style="left:0;top:133.58px;width:480.4px;height:14.82px;background:#ffffff;border-bottom:1px solid #d4d4d4"></div>
<div class="a" style="left:0;top:148.40px;width:480.4px;height:14.82px;background:#ffffff;border-bottom:1px solid #d4d4d4"></div>
<div class="a" style="left:0;top:163.22px;width:480.4px;height:14.82px;background:#ffffff;border-bottom:1px solid #d4d4d4"></div>
<div class="a" style="left:0;top:178.04px;width:480.4px;height:14.82px;background:#ffffff;border-bottom:1px solid #d4d4d4"></div>
<div class="a" style="left:0;top:192.86px;width:480.4px;height:14.82px;background:#ffffff;border-bottom:1px solid #d4d4d4"></div>
<div class="a" style="left:0;top:207.68px;width:480.4px;height:14.82px;background:#ff8040;border-bottom:1px solid #f07838"></div>
<div class="a" style="left:0;top:222.50px;width:480.4px;height:14.82px;background:#ffff00;border-bottom:1px solid #d4d4d4"></div>
<div class="a" style="left:0;top:237.32px;width:480.4px;height:14.82px;background:#ffffff;border-bottom:1px solid #d4d4d4"></div>
<div class="a" style="left:0;top:252.14px;width:480.4px;height:14.82px;background:#ffffff;border-bottom:1px solid #d4d4d4"></div>
<div class="a" style="left:0;top:266.96px;width:480.4px;height:14.82px;background:#ffffff;border-bottom:1px solid #d4d4d4"></div>
<div class="a" style="left:0;top:281.78px;width:480.4px;height:14.82px;background:#ffffff;border-bottom:1px solid #d4d4d4"></div>
<div class="a" style="left:0;top:296.60px;width:480.4px;height:14.82px;background:#ffffff;border-bottom:1px solid #d4d4d4"></div>
<div class="a" style="left:0;top:311.42px;width:480.4px;height:14.82px;background:#ffff00;border-bottom:1px solid #d4d4d4"></div>
<div class="a" style="left:0;top:326.24px;width:480.4px;height:14.82px;background:#ffffff;border-bottom:1px solid #d4d4d4"></div>
<div class="a" style="left:0;top:341.06px;width:480.4px;height:14.82px;background:#ffffff;border-bottom:1px solid #d4d4d4"></div>
<div class="a" style="left:0;top:355.88px;width:480.4px;height:14.82px;background:#ffffff;border-bottom:1px solid #d4d4d4"></div>
<div class="a" style="left:0;top:370.70px;width:480.4px;height:14.82px;background:#ffffff;border-bottom:1px solid #d4d4d4"></div>
<div class="a" style="left:0;top:385.52px;width:480.4px;height:14.82px;background:#ffff00;border-bottom:1px solid #d4d4d4"></div>
<div class="a" style="left:0;top:400.34px;width:480.4px;height:14.82px;background:#ffffff;border-bottom:1px solid #d4d4d4"></div>
<div class="a" style="left:0;top:415.16px;width:480.4px;height:14.82px;background:#ffffff;border-bottom:1px solid #d4d4d4"></div>
<div class="a" style="left:0;top:429.98px;width:480.4px;height:14.82px;background:#ffffff;border-bottom:1px solid #d4d4d4"></div>
<div class="a" style="left:0;top:444.80px;width:480.4px;height:14.82px;background:#ffffff;border-bottom:1px solid #d4d4d4"></div>
<div class="a" style="left:0;top:459.62px;width:480.4px;height:14.82px;background:#ff8040;border-bottom:1px solid #f07838"></div>
<div class="a" style="left:0;top:474.44px;width:480.4px;height:14.82px;background:#ffff00;border-bottom:1px solid #eaea10"></div>
<div class="a" style="left:0;top:489.26px;width:480.4px;height:14.82px;background:#ffff00;border-bottom:1px solid #eaea10"></div>
<div class="a" style="left:0;top:504.08px;width:480.4px;height:14.82px;background:#ffff00;border-bottom:1px solid #eaea10"></div>
<div class="a" style="left:0;top:518.90px;width:480.4px;height:14.82px;background:#ffff00;border-bottom:1px solid #eaea10"></div>
<div class="a" style="left:0;top:533.72px;width:480.4px;height:14.82px;background:#ffff00;border-bottom:1px solid #eaea10"></div>
<div class="a" style="left:0;top:548.54px;width:480.4px;height:14.82px;background:#ff8040;border-bottom:1px solid #f07838"></div>
<div class="a" style="left:0;top:563.36px;width:480.4px;height:14.82px;background:#ffff00;border-bottom:1px solid #eaea10"></div>
<div class="a" style="left:0;top:578.18px;width:480.4px;height:14.82px;background:#ffff00;border-bottom:1px solid #eaea10"></div>
<div class="a" style="left:0;top:593.00px;width:480.4px;height:14.82px;background:#ffff00;border-bottom:1px solid #eaea10"></div>
<div class="a" style="left:0;top:607.82px;width:480.4px;height:14.82px;background:#ffff00;border-bottom:1px solid #eaea10"></div>
<div class="a" style="left:0;top:622.64px;width:480.4px;height:14.82px;background:#ff8040;border-bottom:1px solid #f07838"></div>
<div class="a" style="left:0;top:637.46px;width:480.4px;height:14.82px;background:#ffff00;border-bottom:1px solid #d4d4d4"></div>
</div>
<div class="a" style="left:86.8px;top:95.2px;width:1px;height:651px;background:#d4d4d4;opacity:.8"></div>
<div class="a" style="left:136.5px;top:95.2px;width:1px;height:651px;background:#d4d4d4;opacity:.8"></div>
<div class="t bl" style="left:79px;top:97.30px;color:#400080;font-size:10.6px;letter-spacing:0;transform:scaleX(0.92);transform-origin:0 0">1</div>
<div class="t bl" style="left:89.5px;top:97.30px;color:#fff;font-size:10.6px;letter-spacing:0;transform:scaleX(0.92);transform-origin:0 0">новый</div>
<div class="t b" style="left:138.5px;top:97.90px;color:#fff;width:463.33px;overflow:hidden">Будівництво індивідуального житлового будинку</div>
<div class="t bl" style="left:79px;top:112.12px;color:#400080;font-size:10.6px;letter-spacing:0;transform:scaleX(0.92);transform-origin:0 0">2</div>
<div class="t bl" style="left:89.5px;top:112.12px;color:#000;font-size:10.6px;letter-spacing:0;transform:scaleX(0.92);transform-origin:0 0">0</div>
<div class="t b" style="left:145.4px;top:112.72px;color:#000;width:455.67px;overflow:hidden">Купівля земельної ділянки (отримання державного акту)</div>
<div class="t" style="left:89.5px;top:127.54px;color:#202020">0_1</div>
<div class="t" style="left:153.7px;top:127.54px;color:#202020;width:401.80px;overflow:hidden">Визначення основних параметрів пошуку земельної ділянки (напрям, район, віддаленість від міста)</div>
<div class="t" style="left:89.5px;top:142.36px;color:#202020">0_2</div>
<div class="t" style="left:153.7px;top:142.36px;color:#202020;width:401.80px;overflow:hidden">Визначення детальних параметрів до земельної ділянки (ліс,водоймища,наявність доріг,комунікацій)</div>
<div class="t" style="left:89.5px;top:157.18px;color:#202020">0_3</div>
<div class="t" style="left:153.7px;top:157.18px;color:#202020;width:401.80px;overflow:hidden">Пошук земельної ділянки з зазначеними параметрами</div>
<div class="t" style="left:89.5px;top:172.00px;color:#202020">0_4</div>
<div class="t" style="left:153.7px;top:172.00px;color:#202020;width:401.80px;overflow:hidden">Прийняття рішення про купівлю земельної ділянки</div>
<div class="t" style="left:89.5px;top:186.82px;color:#202020">0_5</div>
<div class="t" style="left:153.7px;top:186.82px;color:#202020;width:401.80px;overflow:hidden">Оформлення договору задатку</div>
<div class="t" style="left:89.5px;top:201.64px;color:#202020">0_6</div>
<div class="t" style="left:153.7px;top:201.64px;color:#202020;width:401.80px;overflow:hidden">Отримання від власника земельної ділянки (про відсутність забудов)</div>
<div class="t" style="left:89.5px;top:216.46px;color:#202020">0_7</div>
<div class="t" style="left:153.7px;top:216.46px;color:#202020;width:401.80px;overflow:hidden">Отримання від власника земельної ділянки (обтяження обмеження)</div>
<div class="t" style="left:89.5px;top:231.28px;color:#202020">0_8</div>
<div class="t" style="left:153.7px;top:231.28px;color:#202020;width:401.80px;overflow:hidden">Отримання від власника земельної ділянки (грошова оцінка)</div>
<div class="t" style="left:89.5px;top:246.10px;color:#202020">0_9</div>
<div class="t" style="left:153.7px;top:246.10px;color:#202020;width:401.80px;overflow:hidden">Отримання від власника земельної ділянки (про сплату земельного податку)</div>
<div class="t" style="left:89.5px;top:260.92px;color:#202020">0_10</div>
<div class="t" style="left:153.7px;top:260.92px;color:#202020;width:401.80px;overflow:hidden">Отримання від власника земельної ділянки (державного акту на право власності на земельну ділянку)</div>
<div class="t" style="left:89.5px;top:275.74px;color:#202020">0_11</div>
<div class="t" style="left:153.7px;top:275.74px;color:#202020;width:401.80px;overflow:hidden">Укладання договору КУПІВЛІ-ПРОДАЖУ земельної ділянки</div>
<div class="t" style="left:89.5px;top:290.56px;color:#202020">0_99</div>
<div class="t" style="left:153.7px;top:290.56px;color:#202020;width:401.80px;overflow:hidden">Отримання "ДЕРЖАВНОГО АКТУ на право власності на земельну ділянку"</div>
<div class="t bl" style="left:79px;top:304.78px;color:#400080;font-size:10.6px;letter-spacing:0;transform:scaleX(0.92);transform-origin:0 0">2</div>
<div class="t bl" style="left:89.5px;top:304.78px;color:#000;font-size:10.6px;letter-spacing:0;transform:scaleX(0.92);transform-origin:0 0">1</div>
<div class="t b" style="left:145.4px;top:305.38px;color:#000;width:455.67px;overflow:hidden">Проектування та узгодження житлового будинку (отримання дозволу на будівництво)</div>
<div class="t bl" style="left:79px;top:319.60px;color:#000;font-size:10.6px;letter-spacing:0;transform:scaleX(0.92);transform-origin:0 0">3</div>
<div class="t bl" style="left:89.5px;top:319.60px;color:#000;font-size:10.6px;letter-spacing:0;transform:scaleX(0.92);transform-origin:0 0">1_1</div>
<div class="t b" style="left:153.7px;top:320.20px;color:#000;width:446.44px;overflow:hidden">Проектування індивідуального житлового будинку</div>
<div class="t" style="left:89.5px;top:335.02px;color:#202020">1_1_1</div>
<div class="t" style="left:161.5px;top:335.02px;color:#202020;width:394.00px;overflow:hidden">Визначення вимог до індивідуального житлового будинку (технічне завдання)</div>
<div class="t" style="left:89.5px;top:349.84px;color:#202020">1_1_2</div>
<div class="t" style="left:161.5px;top:349.84px;color:#202020;width:394.00px;overflow:hidden">Вибір типового проекту індивідуального житлового будинку</div>
<div class="t" style="left:89.5px;top:364.66px;color:#202020">1_1_3</div>
<div class="t" style="left:161.5px;top:364.66px;color:#202020;width:394.00px;overflow:hidden">Купівля типового проекту індивідуального житлового будинку</div>
<div class="t" style="left:89.5px;top:379.48px;color:#202020">1_1_4</div>
<div class="t" style="left:161.5px;top:379.48px;color:#202020;width:394.00px;overflow:hidden">Внесення змін до типового проекту</div>
<div class="t" style="left:89.5px;top:394.30px;color:#202020">1_1_5</div>
<div class="t" style="left:161.5px;top:394.30px;color:#202020;width:394.00px;overflow:hidden">Затвердження проекту індивідуального житлового будинку</div>
<div class="t bl" style="left:79px;top:408.52px;color:#000;font-size:10.6px;letter-spacing:0;transform:scaleX(0.92);transform-origin:0 0">3</div>
<div class="t bl" style="left:89.5px;top:408.52px;color:#000;font-size:10.6px;letter-spacing:0;transform:scaleX(0.92);transform-origin:0 0">1_2</div>
<div class="t b" style="left:153.7px;top:409.12px;color:#000;width:446.44px;overflow:hidden">Генеральне планування</div>
<div class="t" style="left:89.5px;top:423.94px;color:#202020">1_2_1</div>
<div class="t" style="left:161.5px;top:423.94px;color:#202020;width:394.00px;overflow:hidden">Визначення переліку будівель та споруд</div>
<div class="t" style="left:89.5px;top:438.76px;color:#202020">1_2_2</div>
<div class="t" style="left:161.5px;top:438.76px;color:#202020;width:394.00px;overflow:hidden">Нанесення будівель та споруд на генеральний план забудови земельної ділянки</div>
<div class="t" style="left:89.5px;top:453.58px;color:#202020">1_2_3</div>
<div class="t" style="left:161.5px;top:453.58px;color:#202020;width:394.00px;overflow:hidden">План благоустрою та озеленення</div>
<div class="t" style="left:89.5px;top:468.40px;color:#202020">1_2_4</div>
<div class="t" style="left:161.5px;top:468.40px;color:#202020;width:394.00px;overflow:hidden">Затвердження генерального плану забудови земельної ділянки</div>
<div class="t bl" style="left:79px;top:482.62px;color:#000;font-size:10.6px;letter-spacing:0;transform:scaleX(0.92);transform-origin:0 0">3</div>
<div class="t bl" style="left:89.5px;top:482.62px;color:#000;font-size:10.6px;letter-spacing:0;transform:scaleX(0.92);transform-origin:0 0">1_3</div>
<div class="t b" style="left:153.7px;top:483.22px;color:#000;width:446.44px;overflow:hidden">Узгодження та отримання дозволу на будівництво</div>
<div class="t" style="left:89.5px;top:498.04px;color:#202020">1_3_1</div>
<div class="t" style="left:161.5px;top:498.04px;color:#202020;width:394.00px;overflow:hidden">Узгодження з санітарно-епідемологічною станцією</div>
<div class="t" style="left:89.5px;top:512.86px;color:#202020">1_3_2</div>
<div class="t" style="left:161.5px;top:512.86px;color:#202020;width:394.00px;overflow:hidden">Узгодження з пожежною охороною</div>
<div class="t" style="left:89.5px;top:527.68px;color:#202020">1_3_3</div>
<div class="t" style="left:161.5px;top:527.68px;color:#202020;width:394.00px;overflow:hidden">Узгодження (фасад)</div>
<div class="t" style="left:89.5px;top:542.50px;color:#202020">1_3_99</div>
<div class="t" style="left:161.5px;top:542.50px;color:#202020;width:394.00px;overflow:hidden">Отримання дозволу на будівництво</div>
<div class="t bl" style="left:79px;top:556.72px;color:#400080;font-size:10.6px;letter-spacing:0;transform:scaleX(0.92);transform-origin:0 0">2</div>
<div class="t bl" style="left:89.5px;top:556.72px;color:#000;font-size:10.6px;letter-spacing:0;transform:scaleX(0.92);transform-origin:0 0">2</div>
<div class="t b" style="left:145.4px;top:557.32px;color:#000;width:455.67px;overflow:hidden">Влаштування зовнішніх інженерних систем життезабезпечення</div>
<div class="t bl" style="left:79px;top:571.54px;color:#000;font-size:10.6px;letter-spacing:0;transform:scaleX(0.92);transform-origin:0 0">3</div>
<div class="t bl" style="left:89.5px;top:571.54px;color:#000;font-size:10.6px;letter-spacing:0;transform:scaleX(0.92);transform-origin:0 0">2_1</div>
<div class="t b" style="left:153.7px;top:572.14px;color:#000;width:446.44px;overflow:hidden">Підключення до системи електропостачання</div>
<div class="t bl" style="left:79px;top:586.36px;color:#000;font-size:10.6px;letter-spacing:0;transform:scaleX(0.92);transform-origin:0 0">3</div>
<div class="t bl" style="left:89.5px;top:586.36px;color:#000;font-size:10.6px;letter-spacing:0;transform:scaleX(0.92);transform-origin:0 0">2_2</div>
<div class="t b" style="left:153.7px;top:586.96px;color:#000;width:446.44px;overflow:hidden">Підключення до системи газопостачання</div>
<div class="t bl" style="left:79px;top:601.18px;color:#000;font-size:10.6px;letter-spacing:0;transform:scaleX(0.92);transform-origin:0 0">3</div>
<div class="t bl" style="left:89.5px;top:601.18px;color:#000;font-size:10.6px;letter-spacing:0;transform:scaleX(0.92);transform-origin:0 0">2_3</div>
<div class="t b" style="left:153.7px;top:601.78px;color:#000;width:446.44px;overflow:hidden">Організація водопостачання</div>
<div class="t bl" style="left:79px;top:616.00px;color:#000;font-size:10.6px;letter-spacing:0;transform:scaleX(0.92);transform-origin:0 0">3</div>
<div class="t bl" style="left:89.5px;top:616.00px;color:#000;font-size:10.6px;letter-spacing:0;transform:scaleX(0.92);transform-origin:0 0">2_4</div>
<div class="t b" style="left:153.7px;top:616.60px;color:#000;width:446.44px;overflow:hidden">Організація водовідведення (каналізації)</div>
<div class="t bl" style="left:79px;top:630.82px;color:#000;font-size:10.6px;letter-spacing:0;transform:scaleX(0.92);transform-origin:0 0">3</div>
<div class="t bl" style="left:89.5px;top:630.82px;color:#000;font-size:10.6px;letter-spacing:0;transform:scaleX(0.92);transform-origin:0 0">2_5</div>
<div class="t b" style="left:153.7px;top:631.42px;color:#000;width:446.44px;overflow:hidden">Влаштування слабострумних мереж</div>
<div class="t bl" style="left:79px;top:645.64px;color:#400080;font-size:10.6px;letter-spacing:0;transform:scaleX(0.92);transform-origin:0 0">2</div>
<div class="t bl" style="left:89.5px;top:645.64px;color:#000;font-size:10.6px;letter-spacing:0;transform:scaleX(0.92);transform-origin:0 0">3</div>
<div class="t b" style="left:145.4px;top:646.24px;color:#000;width:455.67px;overflow:hidden">Роботи початкового періоду</div>
<div class="t bl" style="left:79px;top:660.46px;color:#000;font-size:10.6px;letter-spacing:0;transform:scaleX(0.92);transform-origin:0 0">3</div>
<div class="t bl" style="left:89.5px;top:660.46px;color:#000;font-size:10.6px;letter-spacing:0;transform:scaleX(0.92);transform-origin:0 0">3_1</div>
<div class="t b" style="left:153.7px;top:661.06px;color:#000;width:446.44px;overflow:hidden">Вертикальне планування земельної ділянки</div>
<div class="t bl" style="left:79px;top:675.28px;color:#000;font-size:10.6px;letter-spacing:0;transform:scaleX(0.92);transform-origin:0 0">3</div>
<div class="t bl" style="left:89.5px;top:675.28px;color:#000;font-size:10.6px;letter-spacing:0;transform:scaleX(0.92);transform-origin:0 0">3_2</div>
<div class="t b" style="left:153.7px;top:675.88px;color:#000;width:446.44px;overflow:hidden">Влаштування тимчасової огорожі</div>
<div class="t bl" style="left:79px;top:690.10px;color:#000;font-size:10.6px;letter-spacing:0;transform:scaleX(0.92);transform-origin:0 0">3</div>
<div class="t bl" style="left:89.5px;top:690.10px;color:#000;font-size:10.6px;letter-spacing:0;transform:scaleX(0.92);transform-origin:0 0">3_3</div>
<div class="t b" style="left:153.7px;top:690.70px;color:#000;width:446.44px;overflow:hidden">Влаштування побутового приміщення</div>
<div class="t bl" style="left:79px;top:704.92px;color:#000;font-size:10.6px;letter-spacing:0;transform:scaleX(0.92);transform-origin:0 0">3</div>
<div class="t bl" style="left:89.5px;top:704.92px;color:#000;font-size:10.6px;letter-spacing:0;transform:scaleX(0.92);transform-origin:0 0">3_4</div>
<div class="t b" style="left:153.7px;top:705.52px;color:#000;width:446.44px;overflow:hidden">Організація тимчасового складу</div>
<div class="t bl" style="left:79px;top:719.74px;color:#400080;font-size:10.6px;letter-spacing:0;transform:scaleX(0.92);transform-origin:0 0">2</div>
<div class="t bl" style="left:89.5px;top:719.74px;color:#000;font-size:10.6px;letter-spacing:0;transform:scaleX(0.92);transform-origin:0 0">4</div>
<div class="t b" style="left:145.4px;top:720.34px;color:#000;width:455.67px;overflow:hidden">Будівництво</div>
<div class="t bl" style="left:79px;top:734.56px;color:#000;font-size:10.6px;letter-spacing:0;transform:scaleX(0.92);transform-origin:0 0">3</div>
<div class="t bl" style="left:89.5px;top:734.56px;color:#000;font-size:10.6px;letter-spacing:0;transform:scaleX(0.92);transform-origin:0 0">4_1</div>
<div class="t b" style="left:153.7px;top:735.16px;color:#000;width:446.44px;overflow:hidden">Влаштування котловану</div>
<div class="a" style="left:560.2px;top:54.6px;width:42.09999999999991px;height:1.4px;background:#303030"></div>
<div class="a" style="left:560.2px;top:54.6px;width:1.2px;height:38px;background:#303030"></div>
<div class="a" style="left:561.4000000000001px;top:56px;width:40.899999999999906px;height:36.5px;background:#d8d8d0;border-right:1.3px solid #a0a098"></div>
<div class="t" style="left:562px;top:58px;line-height:11.2px">Длит-ть<br>Дни<br>[План]</div>
<div class="a" style="left:560.2px;top:93.8px;width:42.09999999999991px;height:1.4px;background:#303030"></div>
<div class="a" style="left:560.2px;top:93.8px;width:1.2px;height:665px;background:#303030"></div>
<div class="a" style="left:561.4000000000001px;top:95.40px;width:40.899999999999906px;height:14.82px;background:#ff0000;border-bottom:1px solid #e00000"></div>
<div class="t bn" style="left:560.2px;width:39px;text-align:right;top:97.90px;color:#400080">118.667</div>
<div class="a" style="left:561.4000000000001px;top:110.22px;width:40.899999999999906px;height:14.82px;background:#ff8040;border-bottom:1px solid #d4d4d4"></div>
<div class="t bn" style="left:560.2px;width:39px;text-align:right;top:112.72px;color:#400080">73.000</div>
<div class="a" style="left:561.4000000000001px;top:125.04px;width:40.899999999999906px;height:14.82px;background:#ffffff;border-bottom:1px solid #d4d4d4"></div>
<div class="t" style="left:560.2px;width:39px;text-align:right;top:127.54px;color:#202020">10.000</div>
<div class="a" style="left:561.4000000000001px;top:139.86px;width:40.899999999999906px;height:14.82px;background:#ffffff;border-bottom:1px solid #d4d4d4"></div>
<div class="t" style="left:560.2px;width:39px;text-align:right;top:142.36px;color:#202020">10.000</div>
<div class="a" style="left:561.4000000000001px;top:154.68px;width:40.899999999999906px;height:14.82px;background:#ffffff;border-bottom:1px solid #d4d4d4"></div>
<div class="t" style="left:560.2px;width:39px;text-align:right;top:157.18px;color:#202020">50.000</div>
<div class="a" style="left:561.4000000000001px;top:169.50px;width:40.899999999999906px;height:14.82px;background:#ffffff;border-bottom:1px solid #d4d4d4"></div>
<div class="a" style="left:561.4000000000001px;top:184.32px;width:40.899999999999906px;height:14.82px;background:#ffffff;border-bottom:1px solid #d4d4d4"></div>
<div class="t" style="left:560.2px;width:39px;text-align:right;top:186.82px;color:#202020">1.000</div>
<div class="a" style="left:561.4000000000001px;top:199.14px;width:40.899999999999906px;height:14.82px;background:#ffffff;border-bottom:1px solid #d4d4d4"></div>
<div class="a" style="left:561.4000000000001px;top:213.96px;width:40.899999999999906px;height:14.82px;background:#ffffff;border-bottom:1px solid #d4d4d4"></div>
<div class="a" style="left:561.4000000000001px;top:228.78px;width:40.899999999999906px;height:14.82px;background:#ffffff;border-bottom:1px solid #d4d4d4"></div>
<div class="a" style="left:561.4000000000001px;top:243.60px;width:40.899999999999906px;height:14.82px;background:#ffffff;border-bottom:1px solid #d4d4d4"></div>
<div class="a" style="left:561.4000000000001px;top:258.42px;width:40.899999999999906px;height:14.82px;background:#ffffff;border-bottom:1px solid #d4d4d4"></div>
<div class="a" style="left:561.4000000000001px;top:273.24px;width:40.899999999999906px;height:14.82px;background:#ffffff;border-bottom:1px solid #d4d4d4"></div>
<div class="t" style="left:560.2px;width:39px;text-align:right;top:275.74px;color:#202020">1.000</div>
<div class="a" style="left:561.4000000000001px;top:288.06px;width:40.899999999999906px;height:14.82px;background:#ffffff;border-bottom:1px solid #d4d4d4"></div>
<div class="t" style="left:560.2px;width:39px;text-align:right;top:290.56px;color:#202020">1.000</div>
<div class="a" style="left:561.4000000000001px;top:302.88px;width:40.899999999999906px;height:14.82px;background:#ff8040;border-bottom:1px solid #f07838"></div>
<div class="t bn" style="left:560.2px;width:39px;text-align:right;top:305.38px;color:#400080">51.667</div>
<div class="a" style="left:561.4000000000001px;top:317.70px;width:40.899999999999906px;height:14.82px;background:#ffff00;border-bottom:1px solid #d4d4d4"></div>
<div class="t bn" style="left:560.2px;width:39px;text-align:right;top:320.20px;color:#000">21.667</div>
<div class="a" style="left:561.4000000000001px;top:332.52px;width:40.899999999999906px;height:14.82px;background:#ffffff;border-bottom:1px solid #d4d4d4"></div>
<div class="t" style="left:560.2px;width:39px;text-align:right;top:335.02px;color:#202020">1.667</div>
<div class="a" style="left:561.4000000000001px;top:347.34px;width:40.899999999999906px;height:14.82px;background:#ffffff;border-bottom:1px solid #d4d4d4"></div>
<div class="t" style="left:560.2px;width:39px;text-align:right;top:349.84px;color:#202020">5.000</div>
<div class="a" style="left:561.4000000000001px;top:362.16px;width:40.899999999999906px;height:14.82px;background:#ffffff;border-bottom:1px solid #d4d4d4"></div>
<div class="t" style="left:560.2px;width:39px;text-align:right;top:364.66px;color:#202020">5.000</div>
<div class="a" style="left:561.4000000000001px;top:376.98px;width:40.899999999999906px;height:14.82px;background:#ffffff;border-bottom:1px solid #d4d4d4"></div>
<div class="t" style="left:560.2px;width:39px;text-align:right;top:379.48px;color:#202020">5.000</div>
<div class="a" style="left:561.4000000000001px;top:391.80px;width:40.899999999999906px;height:14.82px;background:#ffffff;border-bottom:1px solid #d4d4d4"></div>
<div class="t" style="left:560.2px;width:39px;text-align:right;top:394.30px;color:#202020">5.000</div>
<div class="a" style="left:561.4000000000001px;top:406.62px;width:40.899999999999906px;height:14.82px;background:#ffff00;border-bottom:1px solid #d4d4d4"></div>
<div class="t bn" style="left:560.2px;width:39px;text-align:right;top:409.12px;color:#000">20.000</div>
<div class="a" style="left:561.4000000000001px;top:421.44px;width:40.899999999999906px;height:14.82px;background:#ffffff;border-bottom:1px solid #d4d4d4"></div>
<div class="t" style="left:560.2px;width:39px;text-align:right;top:423.94px;color:#202020">5.000</div>
<div class="a" style="left:561.4000000000001px;top:436.26px;width:40.899999999999906px;height:14.82px;background:#ffffff;border-bottom:1px solid #d4d4d4"></div>
<div class="t" style="left:560.2px;width:39px;text-align:right;top:438.76px;color:#202020">5.000</div>
<div class="a" style="left:561.4000000000001px;top:451.08px;width:40.899999999999906px;height:14.82px;background:#ffffff;border-bottom:1px solid #d4d4d4"></div>
<div class="t" style="left:560.2px;width:39px;text-align:right;top:453.58px;color:#202020">5.000</div>
<div class="a" style="left:561.4000000000001px;top:465.90px;width:40.899999999999906px;height:14.82px;background:#ffffff;border-bottom:1px solid #d4d4d4"></div>
<div class="t" style="left:560.2px;width:39px;text-align:right;top:468.40px;color:#202020">5.000</div>
<div class="a" style="left:561.4000000000001px;top:480.72px;width:40.899999999999906px;height:14.82px;background:#ffff00;border-bottom:1px solid #d4d4d4"></div>
<div class="t bn" style="left:560.2px;width:39px;text-align:right;top:483.22px;color:#000">10.000</div>
<div class="a" style="left:561.4000000000001px;top:495.54px;width:40.899999999999906px;height:14.82px;background:#ffffff;border-bottom:1px solid #d4d4d4"></div>
<div class="t" style="left:560.2px;width:39px;text-align:right;top:498.04px;color:#202020">5.000</div>
<div class="a" style="left:561.4000000000001px;top:510.36px;width:40.899999999999906px;height:14.82px;background:#ffffff;border-bottom:1px solid #d4d4d4"></div>
<div class="t" style="left:560.2px;width:39px;text-align:right;top:512.86px;color:#202020">5.000</div>
<div class="a" style="left:561.4000000000001px;top:525.18px;width:40.899999999999906px;height:14.82px;background:#ffffff;border-bottom:1px solid #d4d4d4"></div>
<div class="t" style="left:560.2px;width:39px;text-align:right;top:527.68px;color:#202020">5.000</div>
<div class="a" style="left:561.4000000000001px;top:540.00px;width:40.899999999999906px;height:14.82px;background:#ffffff;border-bottom:1px solid #d4d4d4"></div>
<div class="t" style="left:560.2px;width:39px;text-align:right;top:542.50px;color:#202020">1.000</div>
<div class="a" style="left:561.4000000000001px;top:554.82px;width:40.899999999999906px;height:14.82px;background:#ff8040;border-bottom:1px solid #f07838"></div>
<div class="a" style="left:561.4000000000001px;top:569.64px;width:40.899999999999906px;height:14.82px;background:#ffff00;border-bottom:1px solid #eaea10"></div>
<div class="a" style="left:561.4000000000001px;top:584.46px;width:40.899999999999906px;height:14.82px;background:#ffff00;border-bottom:1px solid #eaea10"></div>
<div class="a" style="left:561.4000000000001px;top:599.28px;width:40.899999999999906px;height:14.82px;background:#ffff00;border-bottom:1px solid #eaea10"></div>
<div class="a" style="left:561.4000000000001px;top:614.10px;width:40.899999999999906px;height:14.82px;background:#ffff00;border-bottom:1px solid #eaea10"></div>
<div class="a" style="left:561.4000000000001px;top:628.92px;width:40.899999999999906px;height:14.82px;background:#ffff00;border-bottom:1px solid #eaea10"></div>
<div class="a" style="left:561.4000000000001px;top:643.74px;width:40.899999999999906px;height:14.82px;background:#ff8040;border-bottom:1px solid #f07838"></div>
<div class="a" style="left:561.4000000000001px;top:658.56px;width:40.899999999999906px;height:14.82px;background:#ffff00;border-bottom:1px solid #eaea10"></div>
<div class="a" style="left:561.4000000000001px;top:673.38px;width:40.899999999999906px;height:14.82px;background:#ffff00;border-bottom:1px solid #eaea10"></div>
<div class="a" style="left:561.4000000000001px;top:688.20px;width:40.899999999999906px;height:14.82px;background:#ffff00;border-bottom:1px solid #eaea10"></div>
<div class="a" style="left:561.4000000000001px;top:703.02px;width:40.899999999999906px;height:14.82px;background:#ffff00;border-bottom:1px solid #eaea10"></div>
<div class="a" style="left:561.4000000000001px;top:717.84px;width:40.899999999999906px;height:14.82px;background:#ff8040;border-bottom:1px solid #f07838"></div>
<div class="a" style="left:561.4000000000001px;top:732.66px;width:40.899999999999906px;height:13.34px;background:#ffff00;border-bottom:1px solid #d4d4d4"></div>
<div class="a" style="left:607.5px;top:54.6px;width:375.0px;height:1.4px;background:#303030"></div>
<div class="a" style="left:607.5px;top:54.6px;width:1.3px;height:38px;background:#303030"></div>
<div class="a" style="left:608.8px;top:56px;width:373.7px;height:36.5px;background:#d8d8d0"></div>
<div class="a" style="left:608.8px;top:75.3px;width:373.7px;height:1.3px;background:#505048"></div>
<div class="a" style="left:835px;top:56px;width:1.2px;height:19.5px;background:#a0a098"></div>
<div class="a" style="left:608.8px;top:76.6px;width:373.7px;height:16px;overflow:hidden">
<div class="t" style="left:2.2px;top:1px;font-size:9.5px">Сен</div>
<div class="a" style="left:-0.00px;top:0;width:1.2px;height:16px;background:#a0a098"></div>
<div class="t" style="left:39.20px;width:64.00px;text-align:center;top:1px;font-size:9.5px">Окт</div>
<div class="a" style="left:39.20px;top:0;width:1.2px;height:16px;background:#a0a098"></div>
<div class="t" style="left:103.20px;width:61.00px;text-align:center;top:1px;font-size:9.5px">Ноя</div>
<div class="a" style="left:103.20px;top:0;width:1.2px;height:16px;background:#a0a098"></div>
<div class="t" style="left:164.20px;width:62.75px;text-align:center;top:1px;font-size:9.5px">Дек</div>
<div class="a" style="left:164.20px;top:0;width:1.2px;height:16px;background:#a0a098"></div>
<div class="t" style="left:226.95px;width:63.00px;text-align:center;top:1px;font-size:9.5px">Янв</div>
<div class="a" style="left:226.95px;top:0;width:1.2px;height:16px;background:#a0a098"></div>
<div class="t" style="left:289.95px;width:57.00px;text-align:center;top:1px;font-size:9.5px">Фев</div>
<div class="a" style="left:289.95px;top:0;width:1.2px;height:16px;background:#a0a098"></div>
<div class="t" style="left:346.95px;width:63.25px;text-align:center;top:1px;font-size:9.5px">Мар</div>
<div class="a" style="left:346.95px;top:0;width:1.2px;height:16px;background:#a0a098"></div>
</div>
<div class="a" style="left:607.5px;top:93.8px;width:375.0px;height:1.4px;background:#303030"></div>
<div class="a" style="left:607.5px;top:93.8px;width:1.3px;height:665px;background:#303030"></div>
<div class="a" style="left:608.8px;top:95.2px;width:373.7px;height:651px;background:#fff;overflow:hidden">
<div class="a" style="left:0;top:14.62px;width:380px;height:1px;background:#d0d0d0"></div>
<div class="a" style="left:0;top:29.44px;width:380px;height:1px;background:#d0d0d0"></div>
<div class="a" style="left:0;top:44.26px;width:380px;height:1px;background:#d0d0d0"></div>
<div class="a" style="left:0;top:59.08px;width:380px;height:1px;background:#d0d0d0"></div>
<div class="a" style="left:0;top:73.90px;width:380px;height:1px;background:#d0d0d0"></div>
<div class="a" style="left:0;top:88.72px;width:380px;height:1px;background:#d0d0d0"></div>
<div class="a" style="left:0;top:103.54px;width:380px;height:1px;background:#d0d0d0"></div>
<div class="a" style="left:0;top:118.36px;width:380px;height:1px;background:#d0d0d0"></div>
<div class="a" style="left:0;top:133.18px;width:380px;height:1px;background:#d0d0d0"></div>
<div class="a" style="left:0;top:148.00px;width:380px;height:1px;background:#d0d0d0"></div>
<div class="a" style="left:0;top:162.82px;width:380px;height:1px;background:#d0d0d0"></div>
<div class="a" style="left:0;top:177.64px;width:380px;height:1px;background:#d0d0d0"></div>
<div class="a" style="left:0;top:192.46px;width:380px;height:1px;background:#d0d0d0"></div>
<div class="a" style="left:0;top:207.28px;width:380px;height:1px;background:#d0d0d0"></div>
<div class="a" style="left:0;top:222.10px;width:380px;height:1px;background:#d0d0d0"></div>
<div class="a" style="left:0;top:236.92px;width:380px;height:1px;background:#d0d0d0"></div>
<div class="a" style="left:0;top:251.74px;width:380px;height:1px;background:#d0d0d0"></div>
<div class="a" style="left:0;top:266.56px;width:380px;height:1px;background:#d0d0d0"></div>
<div class="a" style="left:0;top:281.38px;width:380px;height:1px;background:#d0d0d0"></div>
<div class="a" style="left:0;top:296.20px;width:380px;height:1px;background:#d0d0d0"></div>
<div class="a" style="left:0;top:311.02px;width:380px;height:1px;background:#d0d0d0"></div>
<div class="a" style="left:0;top:325.84px;width:380px;height:1px;background:#d0d0d0"></div>
<div class="a" style="left:0;top:340.66px;width:380px;height:1px;background:#d0d0d0"></div>
<div class="a" style="left:0;top:355.48px;width:380px;height:1px;background:#d0d0d0"></div>
<div class="a" style="left:0;top:370.30px;width:380px;height:1px;background:#d0d0d0"></div>
<div class="a" style="left:0;top:385.12px;width:380px;height:1px;background:#d0d0d0"></div>
<div class="a" style="left:0;top:399.94px;width:380px;height:1px;background:#d0d0d0"></div>
<div class="a" style="left:0;top:414.76px;width:380px;height:1px;background:#d0d0d0"></div>
<div class="a" style="left:0;top:429.58px;width:380px;height:1px;background:#d0d0d0"></div>
<div class="a" style="left:0;top:444.40px;width:380px;height:1px;background:#d0d0d0"></div>
<div class="a" style="left:0;top:459.22px;width:380px;height:1px;background:#d0d0d0"></div>
<div class="a" style="left:0;top:474.04px;width:380px;height:1px;background:#d0d0d0"></div>
<div class="a" style="left:0;top:488.86px;width:380px;height:1px;background:#d0d0d0"></div>
<div class="a" style="left:0;top:503.68px;width:380px;height:1px;background:#d0d0d0"></div>
<div class="a" style="left:0;top:518.50px;width:380px;height:1px;background:#d0d0d0"></div>
<div class="a" style="left:0;top:533.32px;width:380px;height:1px;background:#d0d0d0"></div>
<div class="a" style="left:0;top:548.14px;width:380px;height:1px;background:#d0d0d0"></div>
<div class="a" style="left:0;top:562.96px;width:380px;height:1px;background:#d0d0d0"></div>
<div class="a" style="left:0;top:577.78px;width:380px;height:1px;background:#d0d0d0"></div>
<div class="a" style="left:0;top:592.60px;width:380px;height:1px;background:#d0d0d0"></div>
<div class="a" style="left:0;top:607.42px;width:380px;height:1px;background:#d0d0d0"></div>
<div class="a" style="left:0;top:622.24px;width:380px;height:1px;background:#d0d0d0"></div>
<div class="a" style="left:0;top:637.06px;width:380px;height:1px;background:#d0d0d0"></div>
<div class="a" style="left:0;top:651.88px;width:380px;height:1px;background:#d0d0d0"></div>
<div class="a" style="left:38.90px;top:0;width:1px;height:651px;background:#cacaca"></div>
<div class="a" style="left:102.90px;top:0;width:1px;height:651px;background:#cacaca"></div>
<div class="a" style="left:163.90px;top:0;width:1px;height:651px;background:#cacaca"></div>
<div class="a" style="left:226.65px;top:0;width:1px;height:651px;background:#cacaca"></div>
<div class="a" style="left:289.65px;top:0;width:1px;height:651px;background:#cacaca"></div>
<div class="a" style="left:346.65px;top:0;width:1px;height:651px;background:#cacaca"></div>
<div class="a" style="left:2.10px;top:0;width:1.2px;height:651px;background:repeating-linear-gradient(180deg,#000 0 1.8px,transparent 1.8px 3.6px)"></div>
<div class="a" style="left:248.90px;top:0;width:1.2px;height:651px;background:repeating-linear-gradient(180deg,#000 0 1.8px,transparent 1.8px 3.6px)"></div>
<div class="a" style="left:2.70px;top:3.60px;width:246.70px;height:6.6px;background:#ff0000;border-bottom:1.2px solid #700000;border-right:1.2px solid #700000"></div>
<div class="t b" style="left:254.70px;top:2.70px;color:#111">Будівництво індивідуального житлового будинку</div>
<div class="a" style="left:2.70px;top:18.42px;width:147.50px;height:6.6px;background:#ff8040;border-bottom:1.2px solid #603010;border-right:1.2px solid #603010"></div>
<div class="t b" style="left:155.20px;top:17.52px;color:#111">Купівля земельної ділянки (отримання державного акту)</div>
<div class="a" style="left:2.70px;top:33.24px;width:20.00px;height:6.6px;background:#ff0000;border-bottom:1.2px solid #700000;border-right:1.2px solid #700000"></div>
<div class="t" style="left:28.20px;top:32.34px;color:#111">Визначення основних параметрів пошуку земельної ділянки (напрям, район, віддаленість від міста)</div>
<div class="a" style="left:22.10px;top:39.84px;width:1.2px;height:4.22px;background:#111"></div>
<div class="a" style="left:19.70px;top:43.66px;width:0;height:0;border-left:3px solid transparent;border-right:3px solid transparent;border-top:4.4px solid #000"></div>
<div class="a" style="left:22.70px;top:48.06px;width:20.50px;height:6.6px;background:#ff0000;border-bottom:1.2px solid #700000;border-right:1.2px solid #700000"></div>
<div class="t" style="left:48.20px;top:47.16px;color:#111">Визначення детальних параметрів до земельної ділянки (ліс,водоймища,наявність доріг,комунікацій)</div>
<div class="a" style="left:42.60px;top:54.66px;width:1.2px;height:4.22px;background:#111"></div>
<div class="a" style="left:40.20px;top:58.48px;width:0;height:0;border-left:3px solid transparent;border-right:3px solid transparent;border-top:4.4px solid #000"></div>
<div class="a" style="left:43.20px;top:62.88px;width:101.40px;height:6.6px;background:#ff0000;border-bottom:1.2px solid #700000;border-right:1.2px solid #700000"></div>
<div class="t" style="left:150.20px;top:61.98px;color:#111">Пошук земельної ділянки з зазначеними параметрами</div>
<div class="a" style="left:144.00px;top:69.48px;width:1.2px;height:4.22px;background:#111"></div>
<div class="a" style="left:141.60px;top:73.30px;width:0;height:0;border-left:3px solid transparent;border-right:3px solid transparent;border-top:4.4px solid #000"></div>
<div class="a" style="left:141.10px;top:77.71px;width:7px;height:7px;background:#ff0000;transform:rotate(45deg);border:0.8px solid #800000"></div>
<div class="t" style="left:150.20px;top:76.80px;color:#111">Прийняття рішення про купівлю земельної ділянки</div>
<div class="a" style="left:144.20px;top:84.30px;width:1.2px;height:4.22px;background:#111"></div>
<div class="a" style="left:141.80px;top:88.12px;width:0;height:0;border-left:3px solid transparent;border-right:3px solid transparent;border-top:4.4px solid #000"></div>
<div class="a" style="left:144.80px;top:92.52px;width:2.00px;height:6.6px;background:#c00000;border-bottom:1.2px solid #600000;border-right:1.2px solid #600000"></div>
<div class="t" style="left:151.80px;top:91.62px;color:#111">Оформлення договору задатку</div>
<div class="a" style="left:145.80px;top:99.12px;width:1.2px;height:4.22px;background:#111"></div>
<div class="a" style="left:143.40px;top:102.94px;width:0;height:0;border-left:3px solid transparent;border-right:3px solid transparent;border-top:4.4px solid #000"></div>
<div class="a" style="left:142.90px;top:107.35px;width:7px;height:7px;background:#90e890;transform:rotate(45deg);border:0.8px solid #40a040"></div>
<div class="t" style="left:151.80px;top:106.44px;color:#111">Отримання від власника земельної ділянки (про відсутність забудов)</div>
<div class="a" style="left:145.80px;top:113.94px;width:1.2px;height:4.22px;background:#111"></div>
<div class="a" style="left:143.40px;top:117.76px;width:0;height:0;border-left:3px solid transparent;border-right:3px solid transparent;border-top:4.4px solid #000"></div>
<div class="a" style="left:142.90px;top:122.17px;width:7px;height:7px;background:#90e890;transform:rotate(45deg);border:0.8px solid #40a040"></div>
<div class="t" style="left:151.80px;top:121.26px;color:#111">Отримання від власника земельної ділянки (обтяження обмеження)</div>
<div class="a" style="left:145.80px;top:128.76px;width:1.2px;height:4.22px;background:#111"></div>
<div class="a" style="left:143.40px;top:132.58px;width:0;height:0;border-left:3px solid transparent;border-right:3px solid transparent;border-top:4.4px solid #000"></div>
<div class="a" style="left:142.90px;top:136.99px;width:7px;height:7px;background:#90e890;transform:rotate(45deg);border:0.8px solid #40a040"></div>
<div class="t" style="left:151.80px;top:136.08px;color:#111">Отримання від власника земельної ділянки (грошова оцінка)</div>
<div class="a" style="left:145.80px;top:143.58px;width:1.2px;height:4.22px;background:#111"></div>
<div class="a" style="left:143.40px;top:147.40px;width:0;height:0;border-left:3px solid transparent;border-right:3px solid transparent;border-top:4.4px solid #000"></div>
<div class="a" style="left:142.90px;top:151.81px;width:7px;height:7px;background:#90e890;transform:rotate(45deg);border:0.8px solid #40a040"></div>
<div class="t" style="left:151.80px;top:150.90px;color:#111">Отримання від власника земельної ділянки (про сплату земельного податку)</div>
<div class="a" style="left:145.80px;top:158.40px;width:1.2px;height:4.22px;background:#111"></div>
<div class="a" style="left:143.40px;top:162.22px;width:0;height:0;border-left:3px solid transparent;border-right:3px solid transparent;border-top:4.4px solid #000"></div>
<div class="a" style="left:142.90px;top:166.63px;width:7px;height:7px;background:#ff0000;transform:rotate(45deg);border:0.8px solid #800000"></div>
<div class="t" style="left:151.80px;top:165.72px;color:#111">Отримання від власника земельної ділянки (державного акту на право власності на земельну ділянку)</div>
<div class="a" style="left:146.10px;top:173.22px;width:1.2px;height:4.22px;background:#111"></div>
<div class="a" style="left:143.70px;top:177.04px;width:0;height:0;border-left:3px solid transparent;border-right:3px solid transparent;border-top:4.4px solid #000"></div>
<div class="a" style="left:146.60px;top:181.44px;width:2.00px;height:6.6px;background:#c00000;border-bottom:1.2px solid #600000;border-right:1.2px solid #600000"></div>
<div class="t" style="left:154.20px;top:180.54px;color:#111">Укладання договору КУПІВЛІ-ПРОДАЖУ земельної ділянки</div>
<div class="a" style="left:148.10px;top:188.04px;width:1.2px;height:4.22px;background:#111"></div>
<div class="a" style="left:145.70px;top:191.86px;width:0;height:0;border-left:3px solid transparent;border-right:3px solid transparent;border-top:4.4px solid #000"></div>
<div class="a" style="left:148.40px;top:196.26px;width:1.80px;height:6.6px;background:#ffffff;border-bottom:1.2px solid #303030;border-right:1.2px solid #303030"></div>
<div class="t" style="left:155.90px;top:195.36px;color:#111">Отримання "ДЕРЖАВНОГО АКТУ на право власності на земельну ділянку"</div>
<div class="a" style="left:147.80px;top:202.86px;width:1.2px;height:33.86px;background:#111"></div>
<div class="a" style="left:145.40px;top:236.32px;width:0;height:0;border-left:3px solid transparent;border-right:3px solid transparent;border-top:4.4px solid #000"></div>
<div class="a" style="left:12.70px;top:214.48px;width:135.50px;height:1.3px;background:#603010"></div>
<div class="a" style="left:12.70px;top:213.28px;width:135.50px;height:1.2px;background:#ff9060;opacity:.6"></div>
<div class="a" style="left:2.70px;top:211.08px;width:10.00px;height:6.6px;background:#ff8040;border-bottom:1.2px solid #603010;border-right:1.2px solid #603010"></div>
<div class="a" style="left:148.20px;top:211.08px;width:101.20px;height:6.6px;background:#ff8040;border-bottom:1.2px solid #603010;border-right:1.2px solid #603010"></div>
<div class="t b" style="left:255.20px;top:210.18px;color:#111">Проектування та узгодження житлового будинку (отримання дозволу на будівництво)</div>
<div class="a" style="left:148.20px;top:225.90px;width:44.20px;height:6.6px;background:#ffff00;border-bottom:1.2px solid #303000;border-right:1.2px solid #303000"></div>
<div class="t b" style="left:197.50px;top:225.00px;color:#111">Проектування індивідуального житлового будинку</div>
<div class="a" style="left:148.20px;top:240.72px;width:3.20px;height:6.6px;background:#ff0000;border-bottom:1.2px solid #700000;border-right:1.2px solid #700000"></div>
<div class="t" style="left:156.90px;top:239.82px;color:#111">Визначення вимог до індивідуального житлового будинку (технічне завдання)</div>
<div class="a" style="left:150.80px;top:247.32px;width:1.2px;height:4.22px;background:#111"></div>
<div class="a" style="left:148.40px;top:251.14px;width:0;height:0;border-left:3px solid transparent;border-right:3px solid transparent;border-top:4.4px solid #000"></div>
<div class="a" style="left:151.40px;top:255.54px;width:10.30px;height:6.6px;background:#ff0000;border-bottom:1.2px solid #700000;border-right:1.2px solid #700000"></div>
<div class="t" style="left:167.20px;top:254.64px;color:#111">Вибір типового проекту індивідуального житлового будинку</div>
<div class="a" style="left:161.10px;top:262.14px;width:1.2px;height:4.22px;background:#111"></div>
<div class="a" style="left:158.70px;top:265.96px;width:0;height:0;border-left:3px solid transparent;border-right:3px solid transparent;border-top:4.4px solid #000"></div>
<div class="a" style="left:161.70px;top:270.36px;width:10.20px;height:6.6px;background:#ff0000;border-bottom:1.2px solid #700000;border-right:1.2px solid #700000"></div>
<div class="t" style="left:177.40px;top:269.46px;color:#111">Купівля типового проекту індивідуального житлового будинку</div>
<div class="a" style="left:171.30px;top:276.96px;width:1.2px;height:4.22px;background:#111"></div>
<div class="a" style="left:168.90px;top:280.78px;width:0;height:0;border-left:3px solid transparent;border-right:3px solid transparent;border-top:4.4px solid #000"></div>
<div class="a" style="left:171.90px;top:285.18px;width:10.30px;height:6.6px;background:#ff0000;border-bottom:1.2px solid #700000;border-right:1.2px solid #700000"></div>
<div class="t" style="left:187.70px;top:284.28px;color:#111">Внесення змін до типового проекту</div>
<div class="a" style="left:181.60px;top:291.78px;width:1.2px;height:4.22px;background:#111"></div>
<div class="a" style="left:179.20px;top:295.60px;width:0;height:0;border-left:3px solid transparent;border-right:3px solid transparent;border-top:4.4px solid #000"></div>
<div class="a" style="left:182.20px;top:300.00px;width:10.20px;height:6.6px;background:#ff0000;border-bottom:1.2px solid #700000;border-right:1.2px solid #700000"></div>
<div class="t" style="left:197.90px;top:299.10px;color:#111">Затвердження проекту індивідуального житлового будинку</div>
<div class="a" style="left:191.80px;top:306.60px;width:1.2px;height:8.22px;background:#111"></div>
<div class="a" style="left:192.40px;top:314.82px;width:44.80px;height:6.6px;background:#ffff00;border-bottom:1.2px solid #303000;border-right:1.2px solid #303000"></div>
<div class="t b" style="left:241.60px;top:313.92px;color:#111">Генеральне планування</div>
<div class="a" style="left:191.80px;top:321.42px;width:1.2px;height:4.22px;background:#111"></div>
<div class="a" style="left:189.40px;top:325.24px;width:0;height:0;border-left:3px solid transparent;border-right:3px solid transparent;border-top:4.4px solid #000"></div>
<div class="a" style="left:192.40px;top:329.64px;width:10.00px;height:6.6px;background:#ff0000;border-bottom:1.2px solid #700000;border-right:1.2px solid #700000"></div>
<div class="t" style="left:207.00px;top:328.74px;color:#111">Визначення переліку будівель та споруд</div>
<div class="a" style="left:201.80px;top:336.24px;width:1.2px;height:4.22px;background:#111"></div>
<div class="a" style="left:199.40px;top:340.06px;width:0;height:0;border-left:3px solid transparent;border-right:3px solid transparent;border-top:4.4px solid #000"></div>
<div class="a" style="left:202.40px;top:344.46px;width:10.40px;height:6.6px;background:#ff0000;border-bottom:1.2px solid #700000;border-right:1.2px solid #700000"></div>
<div class="t" style="left:217.40px;top:343.56px;color:#111">Нанесення будівель та споруд на генеральний план забудови земельної ділянки</div>
<div class="a" style="left:212.20px;top:351.06px;width:1.2px;height:4.22px;background:#111"></div>
<div class="a" style="left:209.80px;top:354.88px;width:0;height:0;border-left:3px solid transparent;border-right:3px solid transparent;border-top:4.4px solid #000"></div>
<div class="a" style="left:212.80px;top:359.28px;width:10.10px;height:6.6px;background:#ff0000;border-bottom:1.2px solid #700000;border-right:1.2px solid #700000"></div>
<div class="t" style="left:227.50px;top:358.38px;color:#111">План благоустрою та озеленення</div>
<div class="a" style="left:222.30px;top:365.88px;width:1.2px;height:4.22px;background:#111"></div>
<div class="a" style="left:219.90px;top:369.70px;width:0;height:0;border-left:3px solid transparent;border-right:3px solid transparent;border-top:4.4px solid #000"></div>
<div class="a" style="left:222.90px;top:374.10px;width:14.30px;height:6.6px;background:#ff0000;border-bottom:1.2px solid #700000;border-right:1.2px solid #700000"></div>
<div class="t" style="left:241.80px;top:373.20px;color:#111">Затвердження генерального плану забудови земельної ділянки</div>
<div class="a" style="left:236.60px;top:380.70px;width:1.2px;height:8.22px;background:#111"></div>
<div class="a" style="left:12.50px;top:392.32px;width:224.70px;height:1.3px;background:#202000"></div>
<div class="a" style="left:12.50px;top:391.12px;width:224.70px;height:1.2px;background:#ffff60;opacity:.7"></div>
<div class="a" style="left:2.40px;top:388.92px;width:10.10px;height:6.6px;background:#ffff00;border-bottom:1.2px solid #303000;border-right:1.2px solid #303000"></div>
<div class="a" style="left:237.20px;top:388.92px;width:12.20px;height:6.6px;background:#ffff00;border-bottom:1.2px solid #303000;border-right:1.2px solid #303000"></div>
<div class="t b" style="left:254.80px;top:388.02px;color:#111">Узгодження та отримання дозволу на будівництво</div>
<div class="a" style="left:237.20px;top:403.74px;width:12.20px;height:6.6px;background:#ff0000;border-bottom:1.2px solid #700000;border-right:1.2px solid #700000"></div>
<div class="t" style="left:255.50px;top:402.84px;color:#111">Узгодження з санітарно-епідемологічною станцією</div>
<div class="a" style="left:236.60px;top:395.52px;width:1.2px;height:4.22px;background:#111"></div>
<div class="a" style="left:234.20px;top:399.34px;width:0;height:0;border-left:3px solid transparent;border-right:3px solid transparent;border-top:4.4px solid #000"></div>
<div class="a" style="left:237.20px;top:418.56px;width:12.20px;height:6.6px;background:#ff0000;border-bottom:1.2px solid #700000;border-right:1.2px solid #700000"></div>
<div class="t" style="left:255.50px;top:417.66px;color:#111">Узгодження з пожежною охороною</div>
<div class="a" style="left:236.60px;top:410.34px;width:1.2px;height:4.22px;background:#111"></div>
<div class="a" style="left:234.20px;top:414.16px;width:0;height:0;border-left:3px solid transparent;border-right:3px solid transparent;border-top:4.4px solid #000"></div>
<div class="a" style="left:237.20px;top:433.38px;width:12.20px;height:6.6px;background:#ff0000;border-bottom:1.2px solid #700000;border-right:1.2px solid #700000"></div>
<div class="t" style="left:255.50px;top:432.48px;color:#111">Узгодження (фасад)</div>
<div class="a" style="left:236.60px;top:425.16px;width:1.2px;height:4.22px;background:#111"></div>
<div class="a" style="left:234.20px;top:428.98px;width:0;height:0;border-left:3px solid transparent;border-right:3px solid transparent;border-top:4.4px solid #000"></div>
<div class="a" style="left:2.40px;top:448.20px;width:10.10px;height:6.6px;background:#80ff80;border-bottom:1.2px solid #206020;border-right:1.2px solid #206020"></div>
<div class="t" style="left:18.00px;top:447.30px;color:#111">Отримання дозволу на будівництво</div>
</div>
<div class="a" style="left:555.5px;top:54px;width:4.7000000000000455px;height:705px;background:#d6d6ce"></div>
<div class="a" style="left:557.25px;top:54px;width:1.4px;height:705px;background:#f0f0ec"></div>
<div class="a" style="left:602.3px;top:54px;width:5.2000000000000455px;height:705px;background:#d6d6ce"></div>
<div class="a" style="left:604.30px;top:54px;width:1.4px;height:705px;background:#f0f0ec"></div>
<div class="a" style="left:982.5px;top:54px;width:17.5px;height:705px;background:#dcdcd4"></div>
<div class="a" style="left:984.3px;top:54.6px;width:14.5px;height:38px;background:#d8d8d0;border-left:1.3px solid #303030;border-top:1.3px solid #303030"></div>
<div class="a" style="left:984.3px;top:93.8px;width:14.6px;height:665px;background:#e4e4e0;border-left:1.3px solid #303030;border-top:1.3px solid #303030;border-right:1.3px solid #303030"></div>
<div class="a" style="left:998.9px;top:54px;width:1.1px;height:705px;background:#f0f0ec"></div>
<div class="a" style="left:985.6px;top:95.1px;width:12px;height:12.2px;background:#d4d4cc;border-top:1px solid #f4f4f0;border-left:1px solid #f4f4f0;border-right:1.5px solid #101010;border-bottom:1.5px solid #101010"></div>
<div class="a" style="left:988.5px;top:99px;width:0;height:0;border-left:3.5px solid transparent;border-right:3.5px solid transparent;border-bottom:4px solid #000"></div>
<div class="a" style="left:985.6px;top:107.5px;width:12px;height:26.5px;background:#c4c4bc;border-top:1px solid #f4f4f0;border-left:1px solid #f4f4f0;border-right:1.5px solid #101010;border-bottom:1.5px solid #101010"></div>
<div class="a" style="left:985.6px;top:746.2px;width:12px;height:12.2px;background:#d4d4cc;border-top:1px solid #f4f4f0;border-left:1px solid #f4f4f0;border-right:1.5px solid #101010;border-bottom:1.5px solid #101010"></div>
<div class="a" style="left:988.5px;top:750px;width:0;height:0;border-left:3.5px solid transparent;border-right:3.5px solid transparent;border-top:4px solid #000"></div>
<div class="a" style="left:30.2px;top:746px;width:42.3px;height:12.5px;background:#e4e4e0"></div>
<div class="a" style="left:30.2px;top:746.2px;width:11.8px;height:12.2px;background:#d4d4cc;border-top:1px solid #f4f4f0;border-left:1px solid #f4f4f0;border-right:1.5px solid #101010;border-bottom:1.5px solid #101010"></div>
<div class="a" style="left:33.60px;top:748.6px;width:0;height:0;border-top:3.6px solid transparent;border-bottom:3.6px solid transparent;border-right:3.6px solid #a8a8a0"></div>
<div class="a" style="left:59.8px;top:746.2px;width:12.200000000000003px;height:12.2px;background:#d4d4cc;border-top:1px solid #f4f4f0;border-left:1px solid #f4f4f0;border-right:1.5px solid #101010;border-bottom:1.5px solid #101010"></div>
<div class="a" style="left:63.90px;top:748.6px;width:0;height:0;border-top:3.6px solid transparent;border-bottom:3.6px solid transparent;border-left:3.6px solid #a8a8a0"></div>
<div class="a" style="left:75.1px;top:746px;width:480.4px;height:12.5px;background:#e4e4e0"></div>
<div class="a" style="left:75.1px;top:746.2px;width:12.300000000000011px;height:12.2px;background:#d4d4cc;border-top:1px solid #f4f4f0;border-left:1px solid #f4f4f0;border-right:1.5px solid #101010;border-bottom:1.5px solid #101010"></div>
<div class="a" style="left:78.75px;top:748.6px;width:0;height:0;border-top:3.6px solid transparent;border-bottom:3.6px solid transparent;border-right:3.6px solid #000"></div>
<div class="a" style="left:542.7px;top:746.2px;width:12.099999999999909px;height:12.2px;background:#d4d4cc;border-top:1px solid #f4f4f0;border-left:1px solid #f4f4f0;border-right:1.5px solid #101010;border-bottom:1.5px solid #101010"></div>
<div class="a" style="left:546.75px;top:748.6px;width:0;height:0;border-top:3.6px solid transparent;border-bottom:3.6px solid transparent;border-left:3.6px solid #000"></div>
<div class="a" style="left:94.2px;top:746.2px;width:5.599999999999994px;height:12.2px;background:#c4c4bc;border-top:1px solid #f4f4f0;border-left:1px solid #f4f4f0;border-right:1.5px solid #101010;border-bottom:1.5px solid #101010"></div>
<div class="a" style="left:561.4px;top:746px;width:40.89999999999998px;height:12.5px;background:#e4e4e0"></div>
<div class="a" style="left:561.4px;top:746.2px;width:12.100000000000023px;height:12.2px;background:#d4d4cc;border-top:1px solid #f4f4f0;border-left:1px solid #f4f4f0;border-right:1.5px solid #101010;border-bottom:1.5px solid #101010"></div>
<div class="a" style="left:564.95px;top:748.6px;width:0;height:0;border-top:3.6px solid transparent;border-bottom:3.6px solid transparent;border-right:3.6px solid #000"></div>
<div class="a" style="left:590px;top:746.2px;width:12px;height:12.2px;background:#d4d4cc;border-top:1px solid #f4f4f0;border-left:1px solid #f4f4f0;border-right:1.5px solid #101010;border-bottom:1.5px solid #101010"></div>
<div class="a" style="left:594.00px;top:748.6px;width:0;height:0;border-top:3.6px solid transparent;border-bottom:3.6px solid transparent;border-left:3.6px solid #000"></div>
<div class="a" style="left:575px;top:746.2px;width:5px;height:12.2px;background:#c4c4bc;border-top:1px solid #f4f4f0;border-left:1px solid #f4f4f0;border-right:1.5px solid #101010;border-bottom:1.5px solid #101010"></div>
<div class="a" style="left:608.8px;top:746px;width:373.70000000000005px;height:12.5px;background:#e4e4e0"></div>
<div class="a" style="left:608.8px;top:746.2px;width:11.5px;height:12.2px;background:#d4d4cc;border-top:1px solid #f4f4f0;border-left:1px solid #f4f4f0;border-right:1.5px solid #101010;border-bottom:1.5px solid #101010"></div>
<div class="a" style="left:612.05px;top:748.6px;width:0;height:0;border-top:3.6px solid transparent;border-bottom:3.6px solid transparent;border-right:3.6px solid #000"></div>
<div class="a" style="left:970px;top:746.2px;width:11.5px;height:12.2px;background:#d4d4cc;border-top:1px solid #f4f4f0;border-left:1px solid #f4f4f0;border-right:1.5px solid #101010;border-bottom:1.5px solid #101010"></div>
<div class="a" style="left:973.75px;top:748.6px;width:0;height:0;border-top:3.6px solid transparent;border-bottom:3.6px solid transparent;border-left:3.6px solid #000"></div>
<div class="a" style="left:620.3px;top:746.2px;width:18.100000000000023px;height:12.2px;background:#c4c4bc;border-top:1px solid #f4f4f0;border-left:1px solid #f4f4f0;border-right:1.5px solid #101010;border-bottom:1.5px solid #101010"></div>
<div class="a" style="left:0;top:759px;width:1000px;height:1px;background:#f0f0e8"></div>
<div class="a" style="left:0;top:760px;width:1000px;height:18px;background:#c0c0bc"></div>
<div class="a" style="left:0;top:778px;width:1000px;height:1px;background:#e8e8e4"></div>
<div class="a" style="left:0;top:779px;width:1000px;height:2px;background:#c8c8c4"></div>
<div class="t" style="left:5px;top:764px;color:#202020">Фильтр&nbsp; -&nbsp; Нет</div>
<div class="t" style="left:320px;top:764px;color:#202020">Выделено строк&nbsp; -&nbsp; 0</div>
<svg class="a" style="left:0;top:0" width="1000" height="781" viewBox="0 0 1000 781"><rect x="5" y="59.5" width="17.5" height="3" rx="1.5" fill="#40c080"/>
<rect x="5" y="64" width="6.5" height="3" rx="1.2" fill="#c00000"/>
<path d="M10,66 L12,66 L12,73 L17,73 M12,70 L17,70" stroke="#000" stroke-width="1.2" fill="none"/>
<path d="M15,68.5 L17.5,70 L15,71.5 Z M15,71.8 L17.5,73.3 L15,74.8 Z" fill="#000"/>
<rect x="16.5" y="68.5" width="6" height="3" rx="1" fill="#0020a0"/>
<rect x="16.5" y="74.5" width="6" height="3" rx="1" fill="#c00000"/>
<rect x="4" y="81" width="10" height="3" rx="1.5" fill="#30b8c8"/>
<rect x="16.5" y="81" width="5.5" height="3" rx="1.5" fill="#30b8c8"/>
<rect x="4" y="86" width="10" height="2.5" rx="1.2" fill="#c8c840"/>
<rect x="16.5" y="88" width="5.5" height="3" rx="1.5" fill="#000090"/>
<rect x="16.5" y="93" width="5.5" height="2.8" rx="1.4" fill="#20a020"/>
<g transform="translate(4,84.5) scale(1.0333333333333334)" fill="#0000c0"><circle cx="4" cy="2" r="2"/><path d="M1.2,4.3 L6.8,4.3 L8.2,8.5 L6.8,9.2 L6.3,6.8 L6.1,15 L4.5,15 L4.1,10 L3.9,15 L2.3,15 L2.1,6.8 L1.6,9.2 L0,8.5 Z"/></g>
<g transform="translate(4,103.5)"><path d="M0.6,2.2 L11.5,0.6 L12.6,9.6 L1.2,10.4 Z" fill="#d8d060" stroke="#101008" stroke-width="1.3"/><path d="M2.2,3.8 L6.5,2.2" stroke="#fff" stroke-width="1.4"/><path d="M2.5,7.5 L5,6.8 M7.5,4.8 L10.8,4.2 M8,8.2 L11,7.8" stroke="#f8f8e8" stroke-width="1.3"/><path d="M3,5.6 L7.5,5 M5,8.8 L7,8.6" stroke="#909020" stroke-width="1"/></g>
<path d="M19.5,105 L22.5,105 L19.5,118 L18.3,118 Z" fill="#0000d0"/><circle cx="18.4" cy="121" r="1.6" fill="#0000d0"/>
<g transform="translate(4,126)"><path d="M0.6,2.2 L11.5,0.6 L12.6,9.6 L1.2,10.4 Z" fill="#d8d060" stroke="#101008" stroke-width="1.3"/><path d="M2.2,3.8 L6.5,2.2" stroke="#fff" stroke-width="1.4"/><path d="M2.5,7.5 L5,6.8 M7.5,4.8 L10.8,4.2 M8,8.2 L11,7.8" stroke="#f8f8e8" stroke-width="1.3"/><path d="M3,5.6 L7.5,5 M5,8.8 L7,8.6" stroke="#909020" stroke-width="1"/></g>
<g transform="translate(14.5,130) scale(1.0)" fill="#0000c0"><circle cx="4" cy="2" r="2"/><path d="M1.2,4.3 L6.8,4.3 L8.2,8.5 L6.8,9.2 L6.3,6.8 L6.1,15 L4.5,15 L4.1,10 L3.9,15 L2.3,15 L2.1,6.8 L1.6,9.2 L0,8.5 Z"/></g>
<g transform="translate(4,148.5)"><path d="M0.6,2.2 L11.5,0.6 L12.6,9.6 L1.2,10.4 Z" fill="#d8d060" stroke="#101008" stroke-width="1.3"/><path d="M2.2,3.8 L6.5,2.2" stroke="#fff" stroke-width="1.4"/><path d="M2.5,7.5 L5,6.8 M7.5,4.8 L10.8,4.2 M8,8.2 L11,7.8" stroke="#f8f8e8" stroke-width="1.3"/><path d="M3,5.6 L7.5,5 M5,8.8 L7,8.6" stroke="#909020" stroke-width="1"/></g>
<g transform="translate(3.5,152.5) scale(1.0333333333333334)" fill="#0000c0"><circle cx="4" cy="2" r="2"/><path d="M1.2,4.3 L6.8,4.3 L8.2,8.5 L6.8,9.2 L6.3,6.8 L6.1,15 L4.5,15 L4.1,10 L3.9,15 L2.3,15 L2.1,6.8 L1.6,9.2 L0,8.5 Z"/></g>
<g transform="translate(15,152.5) scale(1.0333333333333334)" fill="#0000c0"><circle cx="4" cy="2" r="2"/><path d="M1.2,4.3 L6.8,4.3 L8.2,8.5 L6.8,9.2 L6.3,6.8 L6.1,15 L4.5,15 L4.1,10 L3.9,15 L2.3,15 L2.1,6.8 L1.6,9.2 L0,8.5 Z"/></g>
<path d="M11.8,161 h2.6 v2.6 h2.6 v2.6 h-2.6 v2.6 h-2.6 v-2.6 h-2.6 v-2.6 h2.6 Z" fill="#20b020"/>
<g transform="translate(4,171.5)"><path d="M0.6,2.2 L11.5,0.6 L12.6,9.6 L1.2,10.4 Z" fill="#d8d060" stroke="#101008" stroke-width="1.3"/><path d="M2.2,3.8 L6.5,2.2" stroke="#fff" stroke-width="1.4"/><path d="M2.5,7.5 L5,6.8 M7.5,4.8 L10.8,4.2 M8,8.2 L11,7.8" stroke="#f8f8e8" stroke-width="1.3"/><path d="M3,5.6 L7.5,5 M5,8.8 L7,8.6" stroke="#909020" stroke-width="1"/></g>
<g transform="translate(3.5,175.5) scale(1.0333333333333334)" fill="#0000c0"><circle cx="4" cy="2" r="2"/><path d="M1.2,4.3 L6.8,4.3 L8.2,8.5 L6.8,9.2 L6.3,6.8 L6.1,15 L4.5,15 L4.1,10 L3.9,15 L2.3,15 L2.1,6.8 L1.6,9.2 L0,8.5 Z"/></g>
<g transform="translate(15,175.5) scale(1.0333333333333334)" fill="#0000c0"><circle cx="4" cy="2" r="2"/><path d="M1.2,4.3 L6.8,4.3 L8.2,8.5 L6.8,9.2 L6.3,6.8 L6.1,15 L4.5,15 L4.1,10 L3.9,15 L2.3,15 L2.1,6.8 L1.6,9.2 L0,8.5 Z"/></g>
<text x="10.2" y="190" font-family="Liberation Sans" font-weight="bold" font-size="9" fill="#d02020">?</text>
<g transform="translate(4,194)"><path d="M0.6,2.2 L11.5,0.6 L12.6,9.6 L1.2,10.4 Z" fill="#d8d060" stroke="#101008" stroke-width="1.3"/><path d="M2.2,3.8 L6.5,2.2" stroke="#fff" stroke-width="1.4"/><path d="M2.5,7.5 L5,6.8 M7.5,4.8 L10.8,4.2 M8,8.2 L11,7.8" stroke="#f8f8e8" stroke-width="1.3"/><path d="M3,5.6 L7.5,5 M5,8.8 L7,8.6" stroke="#909020" stroke-width="1"/></g>
<path d="M10,201 L15.5,199 L19,202 L19,213 L15,212 L10,209 Z" fill="#c01010" stroke="#401010" stroke-width="0.8"/>
<ellipse cx="19.5" cy="205" rx="3" ry="2.2" fill="#20a0a0"/><circle cx="16" cy="208" r="1.5" fill="#30c0a0"/>
<path d="M17,196.5 L22,199.5" stroke="#c02020" stroke-width="2"/>
<g transform="translate(4,217)"><path d="M0.6,2.2 L11.5,0.6 L12.6,9.6 L1.2,10.4 Z" fill="#d8d060" stroke="#101008" stroke-width="1.3"/><path d="M2.2,3.8 L6.5,2.2" stroke="#fff" stroke-width="1.4"/><path d="M2.5,7.5 L5,6.8 M7.5,4.8 L10.8,4.2 M8,8.2 L11,7.8" stroke="#f8f8e8" stroke-width="1.3"/><path d="M3,5.6 L7.5,5 M5,8.8 L7,8.6" stroke="#909020" stroke-width="1"/></g>
<text x="5.5" y="236" font-family="Liberation Sans" font-weight="bold" font-size="9.5" fill="#10a010">£</text>
<text x="14.5" y="236" font-family="Liberation Sans" font-weight="bold" font-size="9.5" fill="#1040c0">$</text>
<g transform="translate(4,239.5)"><path d="M0.6,2.2 L11.5,0.6 L12.6,9.6 L1.2,10.4 Z" fill="#d8d060" stroke="#101008" stroke-width="1.3"/><path d="M2.2,3.8 L6.5,2.2" stroke="#fff" stroke-width="1.4"/><path d="M2.5,7.5 L5,6.8 M7.5,4.8 L10.8,4.2 M8,8.2 L11,7.8" stroke="#f8f8e8" stroke-width="1.3"/><path d="M3,5.6 L7.5,5 M5,8.8 L7,8.6" stroke="#909020" stroke-width="1"/></g>
<path d="M15,249 L21,249 L22,251 L19.5,258 L13.5,258 Z" fill="#fff" stroke="#101010" stroke-width="1.2"/><path d="M16,252 L19,252 M15.5,254.5 L18.5,254.5" stroke="#303030" stroke-width="0.8"/>
<g transform="translate(4,262)"><path d="M0.6,2.2 L11.5,0.6 L12.6,9.6 L1.2,10.4 Z" fill="#d8d060" stroke="#101008" stroke-width="1.3"/><path d="M2.2,3.8 L6.5,2.2" stroke="#fff" stroke-width="1.4"/><path d="M2.5,7.5 L5,6.8 M7.5,4.8 L10.8,4.2 M8,8.2 L11,7.8" stroke="#f8f8e8" stroke-width="1.3"/><path d="M3,5.6 L7.5,5 M5,8.8 L7,8.6" stroke="#909020" stroke-width="1"/></g>
<circle cx="18.3" cy="276.3" r="4.3" fill="#20c8d8" stroke="#106080" stroke-width="0.8"/><path d="M16.5,276.5 L18,278 L20.5,275" stroke="#004060" stroke-width="1" fill="none"/>
<g transform="translate(4,284.5)"><path d="M0.6,2.2 L11.5,0.6 L12.6,9.6 L1.2,10.4 Z" fill="#d8d060" stroke="#101008" stroke-width="1.3"/><path d="M2.2,3.8 L6.5,2.2" stroke="#fff" stroke-width="1.4"/><path d="M2.5,7.5 L5,6.8 M7.5,4.8 L10.8,4.2 M8,8.2 L11,7.8" stroke="#f8f8e8" stroke-width="1.3"/><path d="M3,5.6 L7.5,5 M5,8.8 L7,8.6" stroke="#909020" stroke-width="1"/></g>
<rect x="10.5" y="295.5" width="7" height="8" fill="#60b8d0" stroke="#205050" stroke-width="1"/>
<rect x="16" y="293.5" width="6" height="8" fill="#e0e8e0" stroke="#205050" stroke-width="1"/>
<path d="M17,296 h4 M17,299 h4" stroke="#c04040" stroke-width="1"/><path d="M11,302 h5" stroke="#a02020" stroke-width="1.2"/>
<g transform="translate(4,307.5)"><path d="M0.6,2.2 L11.5,0.6 L12.6,9.6 L1.2,10.4 Z" fill="#d8d060" stroke="#101008" stroke-width="1.3"/><path d="M2.2,3.8 L6.5,2.2" stroke="#fff" stroke-width="1.4"/><path d="M2.5,7.5 L5,6.8 M7.5,4.8 L10.8,4.2 M8,8.2 L11,7.8" stroke="#f8f8e8" stroke-width="1.3"/><path d="M3,5.6 L7.5,5 M5,8.8 L7,8.6" stroke="#909020" stroke-width="1"/></g>
<path d="M4.5,322 L8.5,318.5 L8.5,320.8 L14,320.8 L14,323.2 L8.5,323.2 L8.5,325.5 Z" fill="#e01010"/>
<g transform="translate(15,311) scale(1.0)" fill="#0000c0"><circle cx="4" cy="2" r="2"/><path d="M1.2,4.3 L6.8,4.3 L8.2,8.5 L6.8,9.2 L6.3,6.8 L6.1,15 L4.5,15 L4.1,10 L3.9,15 L2.3,15 L2.1,6.8 L1.6,9.2 L0,8.5 Z"/></g>
<g transform="translate(4,330)"><path d="M0.6,2.2 L11.5,0.6 L12.6,9.6 L1.2,10.4 Z" fill="#d8d060" stroke="#101008" stroke-width="1.3"/><path d="M2.2,3.8 L6.5,2.2" stroke="#fff" stroke-width="1.4"/><path d="M2.5,7.5 L5,6.8 M7.5,4.8 L10.8,4.2 M8,8.2 L11,7.8" stroke="#f8f8e8" stroke-width="1.3"/><path d="M3,5.6 L7.5,5 M5,8.8 L7,8.6" stroke="#909020" stroke-width="1"/></g>
<path d="M5,347.5 L22,331.5" stroke="#0030e0" stroke-width="2.6"/><path d="M7.5,343 L11,346 M12,338.5 L15.5,341.5 M16.5,334 L20,337" stroke="#0030e0" stroke-width="1.6"/>
<circle cx="13.5" cy="362" r="9" fill="#f8f000" stroke="#404000" stroke-width="0.9"/>
<path d="M6.5,357 L11,355.5 L11.5,369 L8,368 Z" fill="#c01010" stroke="#401010" stroke-width="0.6"/><path d="M14.5,356 L18.5,358" stroke="#c01010" stroke-width="2"/>
<ellipse cx="17.5" cy="361" rx="2.8" ry="1.6" fill="#30a050"/><circle cx="13.8" cy="364" r="1.5" fill="#30b040"/>
<circle cx="13.5" cy="385" r="9" fill="#f8f000" stroke="#404000" stroke-width="0.9"/>
<g transform="translate(10,377.5) scale(0.9666666666666667)" fill="#101010"><circle cx="4" cy="2" r="2"/><path d="M1.2,4.3 L6.8,4.3 L8.2,8.5 L6.8,9.2 L6.3,6.8 L6.1,15 L4.5,15 L4.1,10 L3.9,15 L2.3,15 L2.1,6.8 L1.6,9.2 L0,8.5 Z"/></g>
<circle cx="13.5" cy="406.8" r="9" fill="#f8f000" stroke="#404000" stroke-width="0.9"/>
<text x="9.5" y="412" font-family="Liberation Serif" font-weight="bold" font-size="14" fill="#000020">$</text>
<g transform="translate(4,420.5)"><path d="M0.6,2.2 L11.5,0.6 L12.6,9.6 L1.2,10.4 Z" fill="#d8d060" stroke="#101008" stroke-width="1.3"/><path d="M2.2,3.8 L6.5,2.2" stroke="#fff" stroke-width="1.4"/><path d="M2.5,7.5 L5,6.8 M7.5,4.8 L10.8,4.2 M8,8.2 L11,7.8" stroke="#f8f8e8" stroke-width="1.3"/><path d="M3,5.6 L7.5,5 M5,8.8 L7,8.6" stroke="#909020" stroke-width="1"/></g>
<path d="M11,433 L14.5,438.5 L22,429.5" stroke="#0010c0" stroke-width="2.4" fill="none"/>
<g transform="translate(4,443)"><path d="M0.6,2.2 L11.5,0.6 L12.6,9.6 L1.2,10.4 Z" fill="#d8d060" stroke="#101008" stroke-width="1.3"/><path d="M2.2,3.8 L6.5,2.2" stroke="#fff" stroke-width="1.4"/><path d="M2.5,7.5 L5,6.8 M7.5,4.8 L10.8,4.2 M8,8.2 L11,7.8" stroke="#f8f8e8" stroke-width="1.3"/><path d="M3,5.6 L7.5,5 M5,8.8 L7,8.6" stroke="#909020" stroke-width="1"/></g>
<path d="M4,458 L6.5,456 L6.5,454.5 L10,458 L6.5,461.5 L6.5,460 Z" fill="#e01010"/>
<path d="M11.5,455.5 L14.5,461.5 L22,452.5" stroke="#0010c0" stroke-width="2.4" fill="none"/>
<path d="M4.5,475.5 L13.5,466 L20,469 L11,479.5 Z" fill="#9010b0" stroke="#400040" stroke-width="0.8"/>
<path d="M4.5,475.5 L11,479.5 L11,481 L4.5,477 Z" fill="#f0d0f0" stroke="#400040" stroke-width="0.6"/>
<path d="M11,479.5 L20,469 L20,470.5 L11,481 Z" fill="#700090"/>
<g transform="translate(4,488.5)"><path d="M0.6,2.2 L11.5,0.6 L12.6,9.6 L1.2,10.4 Z" fill="#d8d060" stroke="#101008" stroke-width="1.3"/><path d="M2.2,3.8 L6.5,2.2" stroke="#fff" stroke-width="1.4"/><path d="M2.5,7.5 L5,6.8 M7.5,4.8 L10.8,4.2 M8,8.2 L11,7.8" stroke="#f8f8e8" stroke-width="1.3"/><path d="M3,5.6 L7.5,5 M5,8.8 L7,8.6" stroke="#909020" stroke-width="1"/></g>
<path d="M13,503 A3.8,3.2 0 1 1 19.5,504.5" stroke="#101060" stroke-width="1.4" fill="none"/><path d="M11,501.5 L14.5,502 L12.5,505.5 Z" fill="#101060"/><g transform="translate(7.5,7)"><circle r="5.2" fill="#e8e8e8"/><path d="M0,-5.5 L1.5,-1.5 L5.5,-2 L2,0.5 L4,4.5 L0,2 L-4,4.5 L-2,0.5 L-5.5,-2 L-1.5,-1.5 Z" fill="#fff"/><circle r="2.4" fill="#202020"/><path d="M-1,-1 L3,-3.5 M0,1 L2,4" stroke="#202020" stroke-width="1"/></g>
<rect x="5.5" y="35.5" width="11.5" height="11" fill="#fffff0" stroke="#101010" stroke-width="1.2"/>
<path d="M11,46.5 L12.5,49 L13.5,46.5" fill="#fffff0" stroke="#101010" stroke-width="1"/>
<text x="8.2" y="44.6" font-family="Liberation Sans" font-weight="bold" font-size="9.5" fill="#000">?</text>
<path d="M24.5,37.5 L29,37.5 L30,38.8 L34,38.8 L34,46.5 L24.5,46.5 Z" fill="#e8e878" stroke="#202010" stroke-width="1"/>
<path d="M24.5,46.5 L28,41.5 L38,41.5 L34,46.5 Z" fill="#909010" stroke="#202010" stroke-width="1"/>
<path d="M30.5,36.5 Q33.5,33.5 36,36" stroke="#101010" stroke-width="1" fill="none"/><path d="M35,34.5 L38,36.5 L35,38 Z" fill="#000"/>
<path d="M45,35.8 L56.7,35.8 L56.7,47 L46.5,47 L45,45.5 Z" fill="#383828"/>
<rect x="47.5" y="36.6" width="6.8" height="4.6" fill="#e8e8e0"/>
<rect x="52.5" y="43.5" width="2" height="2" fill="#e0e0d0"/>
<rect x="74.5" y="34.6" width="14" height="9" fill="#c8e8ff" stroke="#203078" stroke-width="1.3"/>
<path d="M79,35 L79,43.5 M84,35 L84,43.5" stroke="#203078" stroke-width="1.2"/>
<path d="M76.5,36 v3 M81.5,38 v3 M86.5,37 v2" stroke="#304080" stroke-width="1"/>
<path d="M97,39 L98.5,35 L105,35 L106,39 Z" fill="#f0f0f0" stroke="#202020" stroke-width="1"/>
<path d="M94.5,39.5 L107.5,39.5 L107.5,45 L94.5,45 Z" fill="#909090" stroke="#202020" stroke-width="1.1"/>
<path d="M95.5,44.5 L106.5,44.5 L105.5,47 L96.5,47 Z" fill="#606060" stroke="#202020" stroke-width="0.9"/>
<path d="M97,42 h8" stroke="#e0e0e0" stroke-width="0.9"/>
<path d="M119.5,39.5 L126,46.5" stroke="#a0a020" stroke-width="2.2"/><path d="M119.5,39.5 L126,46.5" stroke="#e0e060" stroke-width="0.8"/>
<path d="M115,39.5 L119.5,36 L122,38.8 L117.5,42 Z" fill="#000"/>
<path d="M148,40.5 A4,3.6 0 1 1 152.5,44.5" stroke="#000" stroke-width="1.5" fill="none"/><path d="M145,38.5 L149.5,44.5 L145.5,44.5 Z" fill="#000"/>
<path d="M169.8,35 L171.5,39.5 L175.8,39.8 L172.5,42.6 L173.7,47 L169.8,44.4 L165.9,47 L167.1,42.6 L163.8,39.8 L168.1,39.5 Z" fill="#f0e020" stroke="#605010" stroke-width="0.9"/>
<rect x="184.5" y="35.6" width="11" height="11.4" fill="#e8ffe8" stroke="#205020" stroke-width="1.2"/>
<path d="M186.8,38 L193.2,44.6 M193.2,38 L186.8,44.6" stroke="#209040" stroke-width="2"/>
<rect x="204.5" y="35.3" width="5" height="8.5" fill="#fff" stroke="#101010" stroke-width="1"/>
<path d="M208.5,37.5 L213,37.5 L216,40.5 L216,45.5 L208.5,45.5 Z" fill="#c8c8e8" stroke="#202060" stroke-width="1"/>
<path d="M226,36 L230.5,43 M232,36 L227.5,43" stroke="#101010" stroke-width="1.1"/>
<ellipse cx="226.5" cy="45" rx="1.8" ry="2" fill="none" stroke="#101080" stroke-width="1.2"/><ellipse cx="231.5" cy="45" rx="1.8" ry="2" fill="none" stroke="#101080" stroke-width="1.2"/>
<path d="M240.5,34.5 L245.5,34.5 L248.5,37.5 L248.5,41.5 L240.5,41.5 Z" fill="#d0d0f0" stroke="#303070" stroke-width="1"/>
<rect x="249" y="40.5" width="7.5" height="8.5" fill="#909850"/><path d="M248,41.5 h1 M248,44.5 h1 M248,47.5 h1 M256.5,41.5 h1 M256.5,44.5 h1 M256.5,47.5 h1" stroke="#000" stroke-width="1.3"/>
<path d="M242.5,42 L242.5,46.5 L246,46.5" stroke="#000" stroke-width="1" fill="none"/><path d="M245.5,44.8 L248,46.5 L245.5,48.2 Z" fill="#000"/>
<g transform="translate(274.5,33.5) scale(1.0)" fill="#101010"><circle cx="4" cy="2" r="2"/><path d="M1.2,4.3 L6.8,4.3 L8.2,8.5 L6.8,9.2 L6.3,6.8 L6.1,15 L4.5,15 L4.1,10 L3.9,15 L2.3,15 L2.1,6.8 L1.6,9.2 L0,8.5 Z"/></g>
<path d="M272.5,48 L286,34.5" stroke="#e02020" stroke-width="1.6"/>
<g transform="translate(294.5,33.5) scale(1.0)" fill="#101010"><circle cx="4" cy="2" r="2"/><path d="M1.2,4.3 L6.8,4.3 L8.2,8.5 L6.8,9.2 L6.3,6.8 L6.1,15 L4.5,15 L4.1,10 L3.9,15 L2.3,15 L2.1,6.8 L1.6,9.2 L0,8.5 Z"/></g>
<path d="M310.5,35 L326,49" stroke="#101010" stroke-width="1"/>
<rect x="311" y="36.5" width="5" height="3" transform="rotate(45 313.5 38)" fill="#e0e0d8" stroke="#101010" stroke-width="1"/>
<rect x="318.5" y="43" width="5" height="3" transform="rotate(45 321 44.5)" fill="#e0e0d8" stroke="#101010" stroke-width="1"/>
<rect x="340" y="35.5" width="5.5" height="3.5" rx="1.5" fill="#e8e840" stroke="#303010" stroke-width="0.7"/>
<path d="M345.5,37 L348,37 L348,43.6 L352,43.6" stroke="#000" stroke-width="1" fill="none"/><path d="M350,42 L352.5,43.6 L350,45.2 Z" fill="#000"/>
<rect x="352" y="41.8" width="5" height="3.8" rx="1.5" fill="#e8e840" stroke="#303010" stroke-width="0.7"/>
<g transform="translate(365,33.4) scale(0.9)" fill="#101010"><circle cx="4" cy="2" r="2"/><path d="M1.2,4.3 L6.8,4.3 L8.2,8.5 L6.8,9.2 L6.3,6.8 L6.1,15 L4.5,15 L4.1,10 L3.9,15 L2.3,15 L2.1,6.8 L1.6,9.2 L0,8.5 Z"/></g>
<path d="M363,42.8 L365.2,45 L363,47.2 L360.8,45 Z M373.5,42.8 L375.7,45 L373.5,47.2 L371.3,45 Z" fill="#209030"/>
<path d="M380,48 L385.5,40 L387.5,42.5 L390,36 L395,48 Z" fill="#20a020"/>
<path d="M388.3,40 L390,34.2 L391.8,40 Z" fill="#e02020"/>
<text x="0" y="0" font-family="Liberation Sans" font-weight="bold" font-size="14.5" fill="#202080" transform="translate(398.6 47.6) scale(0.68 1)">S</text>
<path d="M407,35 L413,35.5 L416,38.5 L416,48.5 L408,47.5 Z" fill="#e8d840" stroke="#707010" stroke-width="0.8"/>
<path d="M409,38 v8 M411.5,38 v8.5 M408,40.5 h7 M408,43 h7 M408,45.5 h7" stroke="#40b040" stroke-width="0.7"/></svg>
</body></html>
